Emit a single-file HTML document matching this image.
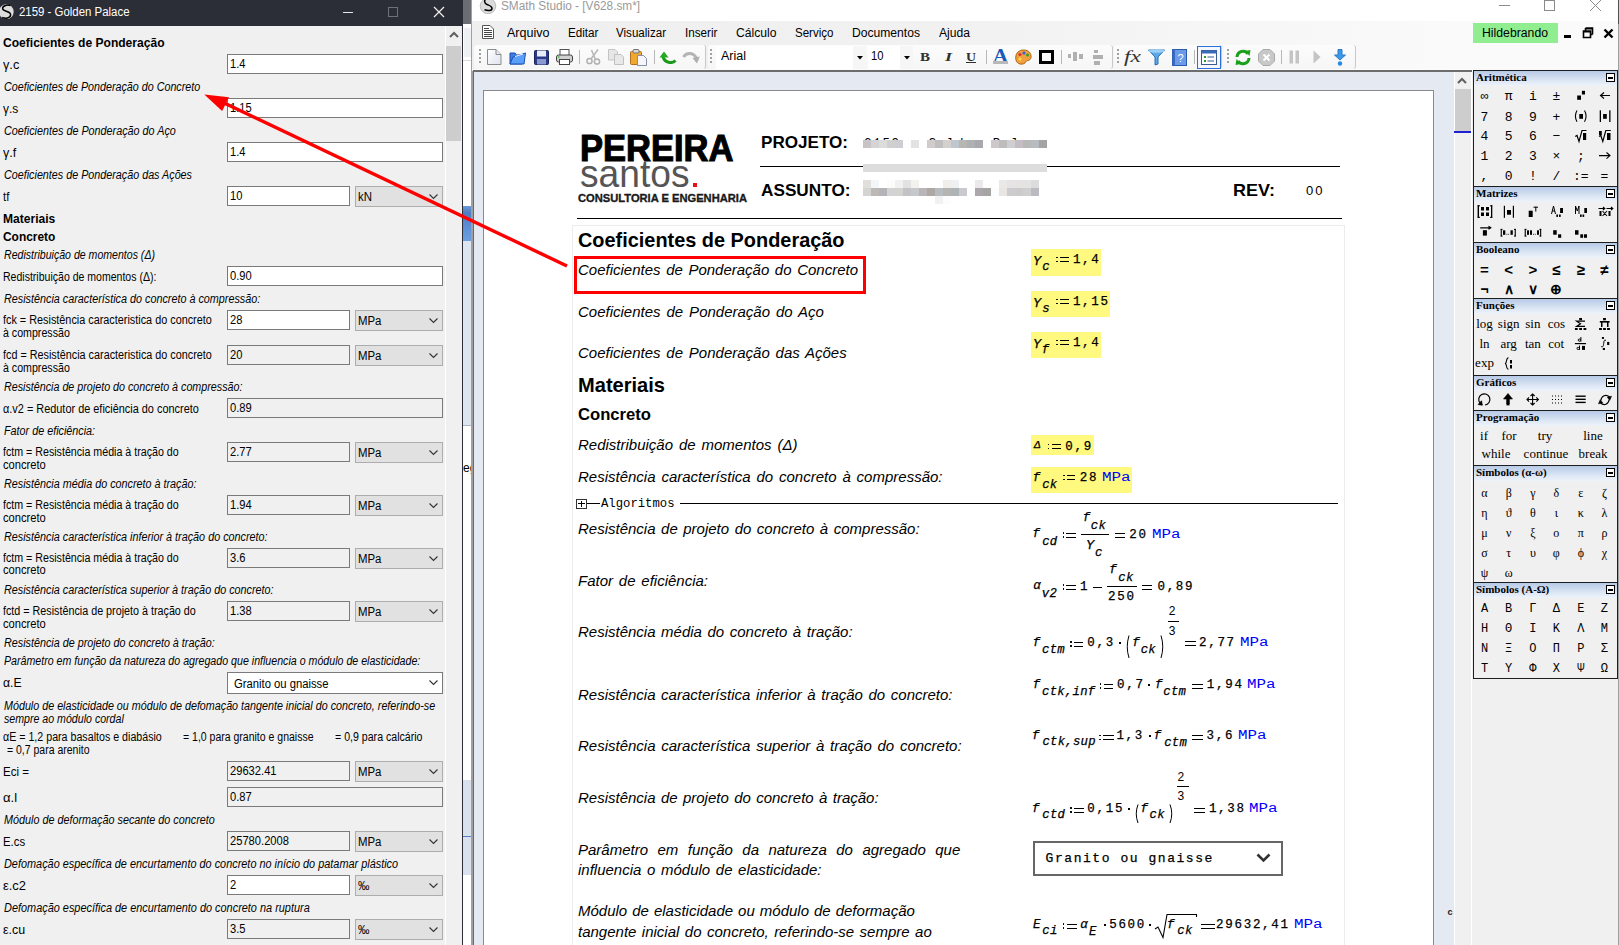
<!DOCTYPE html><html><head><meta charset="utf-8"><style>*{margin:0;padding:0}html,body{width:1619px;height:945px;overflow:hidden;background:#fff;position:relative}
.a{position:absolute}.t{white-space:pre;line-height:normal}
</style></head><body>
<div class="a" style="left:0px;top:0px;width:463px;height:945px;background:#f0f0f0;"></div>
<div class="a" style="left:0px;top:0px;width:463px;height:26px;background:#2b2e37;"></div>
<div class="a" style="left:462px;top:0px;width:1px;height:945px;background:#2b2e37;"></div>
<div class="a" style="left:445px;top:26px;width:1px;height:919px;background:#ffffff;"></div>
<div class="a" style="left:446px;top:26px;width:16px;height:919px;background:#f0f0f0;"></div>
<div class="a" style="left:446px;top:46px;width:15px;height:95px;background:#cdcdcd;"></div>
<svg class="a" style="left:449px;top:31px;" width="10" height="8" viewBox="0 0 10 8"><path d="M1 6 L5 2 L9 6" fill="none" stroke="#606060" stroke-width="2"/></svg>
<svg class="a" style="left:0px;top:2px;" width="16" height="20" viewBox="0 0 16 20"><circle cx="6.3" cy="9.7" r="7.4" fill="#dcdcdc"/><path d="M10.5 3.6 C8 2.6 2.5 3.2 2.6 6.5 C2.7 9.8 10.6 8.8 10.6 12.8 C10.6 16.5 5 16.6 2.2 15.5" fill="none" stroke="#000" stroke-width="1.5"/></svg>
<div class="a t" style="left:19px;top:5.00px;font:12px 'Liberation Sans', sans-serif;color:#ffffff;transform:scaleX(0.9518);transform-origin:0 0;">2159 - Golden Palace</div>
<div class="a" style="left:343px;top:12px;width:10px;height:1px;background:#e8e8e8;"></div>
<div class="a" style="left:388px;top:7px;width:10px;height:10px;box-sizing:border-box;border:1px solid #6e7178;background:none;"></div>
<svg class="a" style="left:433px;top:6px;" width="12" height="12" viewBox="0 0 12 12"><path d="M1 1 L11 11 M11 1 L1 11" stroke="#f0f0f0" stroke-width="1.2"/></svg>
<div class="a t" style="left:3px;top:36.40px;font:bold 12px 'Liberation Sans', sans-serif;color:#000;transform:scaleX(1.0049);transform-origin:0 0;">Coeficientes de Ponderação</div>
<div class="a t" style="left:3px;top:57.80px;font:12px 'Liberation Sans', sans-serif;color:#000;transform:scaleX(1.0623);transform-origin:0 0;">γ.c</div>
<div class="a" style="left:227px;top:54px;width:216px;height:20px;box-sizing:border-box;border:1px solid #7a7a7a;background:#ffffff;"></div>
<div class="a t" style="left:230px;top:57.10px;font:12px 'Liberation Sans', sans-serif;color:#000;transform:scaleX(0.93);transform-origin:0 0;">1.4</div>
<div class="a t" style="left:4px;top:80.10px;font:italic 12px 'Liberation Sans', sans-serif;color:#000;transform:scaleX(0.8939);transform-origin:0 0;">Coeficientes de Ponderação do Concreto</div>
<div class="a t" style="left:3px;top:102.30px;font:12px 'Liberation Sans', sans-serif;color:#000;transform:scaleX(0.9971);transform-origin:0 0;">γ.s</div>
<div class="a" style="left:227px;top:98px;width:216px;height:20px;box-sizing:border-box;border:1px solid #7a7a7a;background:#ffffff;"></div>
<div class="a t" style="left:230px;top:101.10px;font:12px 'Liberation Sans', sans-serif;color:#000;transform:scaleX(0.93);transform-origin:0 0;">1.15</div>
<div class="a t" style="left:4px;top:123.90px;font:italic 12px 'Liberation Sans', sans-serif;color:#000;transform:scaleX(0.8994);transform-origin:0 0;">Coeficientes de Ponderação do Aço</div>
<div class="a t" style="left:3px;top:146.10px;font:12px 'Liberation Sans', sans-serif;color:#000;transform:scaleX(1.0496);transform-origin:0 0;">γ.f</div>
<div class="a" style="left:227px;top:142px;width:216px;height:20px;box-sizing:border-box;border:1px solid #7a7a7a;background:#ffffff;"></div>
<div class="a t" style="left:230px;top:145.10px;font:12px 'Liberation Sans', sans-serif;color:#000;transform:scaleX(0.93);transform-origin:0 0;">1.4</div>
<div class="a t" style="left:4px;top:168.40px;font:italic 12px 'Liberation Sans', sans-serif;color:#000;transform:scaleX(0.8965);transform-origin:0 0;">Coeficientes de Ponderação das Ações</div>
<div class="a t" style="left:3px;top:190.00px;font:12px 'Liberation Sans', sans-serif;color:#000;transform:scaleX(0.9443);transform-origin:0 0;">tf</div>
<div class="a" style="left:227px;top:186px;width:123px;height:20px;box-sizing:border-box;border:1px solid #7a7a7a;background:#ffffff;"></div>
<div class="a t" style="left:230px;top:189.10px;font:12px 'Liberation Sans', sans-serif;color:#000;transform:scaleX(0.93);transform-origin:0 0;">10</div>
<div class="a" style="left:355px;top:186px;width:88px;height:21px;box-sizing:border-box;border:1px solid #adadad;background:#e1e1e1;"></div>
<div class="a t" style="left:358px;top:189.80px;font:12px 'Liberation Sans', sans-serif;color:#000;transform:scaleX(0.95);transform-origin:0 0;">kN</div>
<svg class="a" style="left:429px;top:194px;" width="10" height="6" viewBox="0 0 10 6"><path d="M0.5 0.5 L4.5 4.5 L8.5 0.5" fill="none" stroke="#333" stroke-width="1.1"/></svg>
<div class="a t" style="left:3px;top:212.00px;font:bold 12px 'Liberation Sans', sans-serif;color:#000;transform:scaleX(1.0052);transform-origin:0 0;">Materiais</div>
<div class="a t" style="left:3px;top:230.00px;font:bold 12px 'Liberation Sans', sans-serif;color:#000;transform:scaleX(0.9929);transform-origin:0 0;">Concreto</div>
<div class="a t" style="left:4px;top:247.80px;font:italic 12px 'Liberation Sans', sans-serif;color:#000;transform:scaleX(0.8807);transform-origin:0 0;">Redistribuição de momentos (Δ)</div>
<div class="a t" style="left:3px;top:270.00px;font:12px 'Liberation Sans', sans-serif;color:#000;transform:scaleX(0.8778);transform-origin:0 0;">Redistribuição de momentos (Δ):</div>
<div class="a" style="left:227px;top:266px;width:216px;height:20px;box-sizing:border-box;border:1px solid #7a7a7a;background:#ffffff;"></div>
<div class="a t" style="left:230px;top:269.10px;font:12px 'Liberation Sans', sans-serif;color:#000;transform:scaleX(0.93);transform-origin:0 0;">0.90</div>
<div class="a t" style="left:4px;top:292.20px;font:italic 12px 'Liberation Sans', sans-serif;color:#000;transform:scaleX(0.8996);transform-origin:0 0;">Resistência característica do concreto à compressão:</div>
<div class="a t" style="left:3px;top:313.00px;font:12px 'Liberation Sans', sans-serif;color:#000;transform:scaleX(0.9035);transform-origin:0 0;">fck = Resistência caracteristica do concreto</div>
<div class="a t" style="left:3px;top:325.70px;font:12px 'Liberation Sans', sans-serif;color:#000;transform:scaleX(0.8862);transform-origin:0 0;">à compressão</div>
<div class="a" style="left:227px;top:310px;width:123px;height:20px;box-sizing:border-box;border:1px solid #7a7a7a;background:#ffffff;"></div>
<div class="a t" style="left:230px;top:313.10px;font:12px 'Liberation Sans', sans-serif;color:#000;transform:scaleX(0.93);transform-origin:0 0;">28</div>
<div class="a" style="left:355px;top:310px;width:88px;height:21px;box-sizing:border-box;border:1px solid #adadad;background:#e1e1e1;"></div>
<div class="a t" style="left:358px;top:313.80px;font:12px 'Liberation Sans', sans-serif;color:#000;transform:scaleX(0.95);transform-origin:0 0;">MPa</div>
<svg class="a" style="left:429px;top:318px;" width="10" height="6" viewBox="0 0 10 6"><path d="M0.5 0.5 L4.5 4.5 L8.5 0.5" fill="none" stroke="#333" stroke-width="1.1"/></svg>
<div class="a t" style="left:3px;top:348.30px;font:12px 'Liberation Sans', sans-serif;color:#000;transform:scaleX(0.9008);transform-origin:0 0;">fcd = Resistência caracteristica do concreto</div>
<div class="a t" style="left:3px;top:360.70px;font:12px 'Liberation Sans', sans-serif;color:#000;transform:scaleX(0.8862);transform-origin:0 0;">à compressão</div>
<div class="a" style="left:227px;top:345px;width:123px;height:20px;box-sizing:border-box;border:1px solid #7a7a7a;background:#f0f0f0;"></div>
<div class="a t" style="left:230px;top:348.10px;font:12px 'Liberation Sans', sans-serif;color:#000;transform:scaleX(0.93);transform-origin:0 0;">20</div>
<div class="a" style="left:355px;top:345px;width:88px;height:21px;box-sizing:border-box;border:1px solid #adadad;background:#e1e1e1;"></div>
<div class="a t" style="left:358px;top:348.80px;font:12px 'Liberation Sans', sans-serif;color:#000;transform:scaleX(0.95);transform-origin:0 0;">MPa</div>
<svg class="a" style="left:429px;top:353px;" width="10" height="6" viewBox="0 0 10 6"><path d="M0.5 0.5 L4.5 4.5 L8.5 0.5" fill="none" stroke="#333" stroke-width="1.1"/></svg>
<div class="a t" style="left:4px;top:380.00px;font:italic 12px 'Liberation Sans', sans-serif;color:#000;transform:scaleX(0.8935);transform-origin:0 0;">Resistência de projeto do concreto à compressão:</div>
<div class="a t" style="left:3px;top:401.90px;font:12px 'Liberation Sans', sans-serif;color:#000;transform:scaleX(0.9090);transform-origin:0 0;">α.v2 = Redutor de eficiência do concreto</div>
<div class="a" style="left:227px;top:398px;width:216px;height:20px;box-sizing:border-box;border:1px solid #7a7a7a;background:#f0f0f0;"></div>
<div class="a t" style="left:230px;top:401.10px;font:12px 'Liberation Sans', sans-serif;color:#000;transform:scaleX(0.93);transform-origin:0 0;">0.89</div>
<div class="a t" style="left:4px;top:424.20px;font:italic 12px 'Liberation Sans', sans-serif;color:#000;transform:scaleX(0.8985);transform-origin:0 0;">Fator de eficiência:</div>
<div class="a t" style="left:3px;top:444.90px;font:12px 'Liberation Sans', sans-serif;color:#000;transform:scaleX(0.8884);transform-origin:0 0;">fctm = Resistência média à tração do</div>
<div class="a t" style="left:3px;top:457.70px;font:12px 'Liberation Sans', sans-serif;color:#000;transform:scaleX(0.9298);transform-origin:0 0;">concreto</div>
<div class="a" style="left:227px;top:442px;width:123px;height:20px;box-sizing:border-box;border:1px solid #7a7a7a;background:#f0f0f0;"></div>
<div class="a t" style="left:230px;top:445.10px;font:12px 'Liberation Sans', sans-serif;color:#000;transform:scaleX(0.93);transform-origin:0 0;">2.77</div>
<div class="a" style="left:355px;top:442px;width:88px;height:21px;box-sizing:border-box;border:1px solid #adadad;background:#e1e1e1;"></div>
<div class="a t" style="left:358px;top:445.80px;font:12px 'Liberation Sans', sans-serif;color:#000;transform:scaleX(0.95);transform-origin:0 0;">MPa</div>
<svg class="a" style="left:429px;top:450px;" width="10" height="6" viewBox="0 0 10 6"><path d="M0.5 0.5 L4.5 4.5 L8.5 0.5" fill="none" stroke="#333" stroke-width="1.1"/></svg>
<div class="a t" style="left:4px;top:477.20px;font:italic 12px 'Liberation Sans', sans-serif;color:#000;transform:scaleX(0.8990);transform-origin:0 0;">Resistência média do concreto à tração:</div>
<div class="a t" style="left:3px;top:497.90px;font:12px 'Liberation Sans', sans-serif;color:#000;transform:scaleX(0.8884);transform-origin:0 0;">fctm = Resistência média à tração do</div>
<div class="a t" style="left:3px;top:510.70px;font:12px 'Liberation Sans', sans-serif;color:#000;transform:scaleX(0.9298);transform-origin:0 0;">concreto</div>
<div class="a" style="left:227px;top:495px;width:123px;height:20px;box-sizing:border-box;border:1px solid #7a7a7a;background:#f0f0f0;"></div>
<div class="a t" style="left:230px;top:498.10px;font:12px 'Liberation Sans', sans-serif;color:#000;transform:scaleX(0.93);transform-origin:0 0;">1.94</div>
<div class="a" style="left:355px;top:495px;width:88px;height:21px;box-sizing:border-box;border:1px solid #adadad;background:#e1e1e1;"></div>
<div class="a t" style="left:358px;top:498.80px;font:12px 'Liberation Sans', sans-serif;color:#000;transform:scaleX(0.95);transform-origin:0 0;">MPa</div>
<svg class="a" style="left:429px;top:503px;" width="10" height="6" viewBox="0 0 10 6"><path d="M0.5 0.5 L4.5 4.5 L8.5 0.5" fill="none" stroke="#333" stroke-width="1.1"/></svg>
<div class="a t" style="left:4px;top:529.90px;font:italic 12px 'Liberation Sans', sans-serif;color:#000;transform:scaleX(0.9002);transform-origin:0 0;">Resistência característica inferior à tração do concreto:</div>
<div class="a t" style="left:3px;top:550.70px;font:12px 'Liberation Sans', sans-serif;color:#000;transform:scaleX(0.8884);transform-origin:0 0;">fctm = Resistência média à tração do</div>
<div class="a t" style="left:3px;top:563.40px;font:12px 'Liberation Sans', sans-serif;color:#000;transform:scaleX(0.9298);transform-origin:0 0;">concreto</div>
<div class="a" style="left:227px;top:548px;width:123px;height:20px;box-sizing:border-box;border:1px solid #7a7a7a;background:#f0f0f0;"></div>
<div class="a t" style="left:230px;top:551.10px;font:12px 'Liberation Sans', sans-serif;color:#000;transform:scaleX(0.93);transform-origin:0 0;">3.6</div>
<div class="a" style="left:355px;top:548px;width:88px;height:21px;box-sizing:border-box;border:1px solid #adadad;background:#e1e1e1;"></div>
<div class="a t" style="left:358px;top:551.80px;font:12px 'Liberation Sans', sans-serif;color:#000;transform:scaleX(0.95);transform-origin:0 0;">MPa</div>
<svg class="a" style="left:429px;top:556px;" width="10" height="6" viewBox="0 0 10 6"><path d="M0.5 0.5 L4.5 4.5 L8.5 0.5" fill="none" stroke="#333" stroke-width="1.1"/></svg>
<div class="a t" style="left:4px;top:583.00px;font:italic 12px 'Liberation Sans', sans-serif;color:#000;transform:scaleX(0.9002);transform-origin:0 0;">Resistência característica superior à tração do concreto:</div>
<div class="a t" style="left:3px;top:603.80px;font:12px 'Liberation Sans', sans-serif;color:#000;transform:scaleX(0.8962);transform-origin:0 0;">fctd = Resistência de projeto à tração do</div>
<div class="a t" style="left:3px;top:616.60px;font:12px 'Liberation Sans', sans-serif;color:#000;transform:scaleX(0.9298);transform-origin:0 0;">concreto</div>
<div class="a" style="left:227px;top:601px;width:123px;height:20px;box-sizing:border-box;border:1px solid #7a7a7a;background:#f0f0f0;"></div>
<div class="a t" style="left:230px;top:604.10px;font:12px 'Liberation Sans', sans-serif;color:#000;transform:scaleX(0.93);transform-origin:0 0;">1.38</div>
<div class="a" style="left:355px;top:601px;width:88px;height:21px;box-sizing:border-box;border:1px solid #adadad;background:#e1e1e1;"></div>
<div class="a t" style="left:358px;top:604.80px;font:12px 'Liberation Sans', sans-serif;color:#000;transform:scaleX(0.95);transform-origin:0 0;">MPa</div>
<svg class="a" style="left:429px;top:609px;" width="10" height="6" viewBox="0 0 10 6"><path d="M0.5 0.5 L4.5 4.5 L8.5 0.5" fill="none" stroke="#333" stroke-width="1.1"/></svg>
<div class="a t" style="left:4px;top:635.80px;font:italic 12px 'Liberation Sans', sans-serif;color:#000;transform:scaleX(0.8977);transform-origin:0 0;">Resistência de projeto do concreto à tração:</div>
<div class="a t" style="left:4px;top:653.60px;font:italic 12px 'Liberation Sans', sans-serif;color:#000;transform:scaleX(0.8864);transform-origin:0 0;">Parâmetro em função da natureza do agregado que influencia o módulo de elasticidade:</div>
<div class="a t" style="left:3px;top:675.80px;font:12px 'Liberation Sans', sans-serif;color:#000;transform:scaleX(1.0174);transform-origin:0 0;">α.E</div>
<div class="a" style="left:227px;top:672px;width:216px;height:22px;box-sizing:border-box;border:1px solid #7a7a7a;background:#ffffff;"></div>
<div class="a t" style="left:234px;top:676.50px;font:12px 'Liberation Sans', sans-serif;color:#000;transform:scaleX(0.9381);transform-origin:0 0;">Granito ou gnaisse</div>
<svg class="a" style="left:429px;top:680px;" width="10" height="6" viewBox="0 0 10 6"><path d="M0.5 0.5 L4.5 4.5 L8.5 0.5" fill="none" stroke="#333" stroke-width="1.1"/></svg>
<div class="a t" style="left:4px;top:698.80px;font:italic 12px 'Liberation Sans', sans-serif;color:#000;transform:scaleX(0.8951);transform-origin:0 0;">Módulo de elasticidade ou módulo de defomação tangente inicial do concreto, referindo-se</div>
<div class="a t" style="left:4px;top:711.80px;font:italic 12px 'Liberation Sans', sans-serif;color:#000;transform:scaleX(0.8847);transform-origin:0 0;">sempre ao módulo cordal</div>
<div class="a t" style="left:3px;top:729.90px;font:12px 'Liberation Sans', sans-serif;color:#000;transform:scaleX(0.8885);transform-origin:0 0;">αE = 1,2 para basaltos e diabásio</div>
<div class="a t" style="left:183px;top:729.90px;font:12px 'Liberation Sans', sans-serif;color:#000;transform:scaleX(0.8752);transform-origin:0 0;">= 1,0 para granito e gnaisse</div>
<div class="a t" style="left:335px;top:729.90px;font:12px 'Liberation Sans', sans-serif;color:#000;transform:scaleX(0.8833);transform-origin:0 0;">= 0,9 para calcário</div>
<div class="a t" style="left:7px;top:743.00px;font:12px 'Liberation Sans', sans-serif;color:#000;transform:scaleX(0.8739);transform-origin:0 0;">= 0,7 para arenito</div>
<div class="a t" style="left:3px;top:764.60px;font:12px 'Liberation Sans', sans-serif;color:#000;transform:scaleX(0.9624);transform-origin:0 0;">Eci =</div>
<div class="a" style="left:227px;top:761px;width:123px;height:20px;box-sizing:border-box;border:1px solid #7a7a7a;background:#f0f0f0;"></div>
<div class="a t" style="left:230px;top:764.10px;font:12px 'Liberation Sans', sans-serif;color:#000;transform:scaleX(0.93);transform-origin:0 0;">29632.41</div>
<div class="a" style="left:355px;top:761px;width:88px;height:21px;box-sizing:border-box;border:1px solid #adadad;background:#e1e1e1;"></div>
<div class="a t" style="left:358px;top:764.80px;font:12px 'Liberation Sans', sans-serif;color:#000;transform:scaleX(0.95);transform-origin:0 0;">MPa</div>
<svg class="a" style="left:429px;top:769px;" width="10" height="6" viewBox="0 0 10 6"><path d="M0.5 0.5 L4.5 4.5 L8.5 0.5" fill="none" stroke="#333" stroke-width="1.1"/></svg>
<div class="a t" style="left:3px;top:790.70px;font:12px 'Liberation Sans', sans-serif;color:#000;transform:scaleX(1.0899);transform-origin:0 0;">α.l</div>
<div class="a" style="left:227px;top:787px;width:216px;height:20px;box-sizing:border-box;border:1px solid #7a7a7a;background:#f0f0f0;"></div>
<div class="a t" style="left:230px;top:790.10px;font:12px 'Liberation Sans', sans-serif;color:#000;transform:scaleX(0.93);transform-origin:0 0;">0.87</div>
<div class="a t" style="left:4px;top:812.90px;font:italic 12px 'Liberation Sans', sans-serif;color:#000;transform:scaleX(0.9003);transform-origin:0 0;">Módulo de deformação secante do concreto</div>
<div class="a t" style="left:3px;top:834.90px;font:12px 'Liberation Sans', sans-serif;color:#000;transform:scaleX(0.9467);transform-origin:0 0;">E.cs</div>
<div class="a" style="left:227px;top:831px;width:123px;height:20px;box-sizing:border-box;border:1px solid #7a7a7a;background:#f0f0f0;"></div>
<div class="a t" style="left:230px;top:834.10px;font:12px 'Liberation Sans', sans-serif;color:#000;transform:scaleX(0.93);transform-origin:0 0;">25780.2008</div>
<div class="a" style="left:355px;top:831px;width:88px;height:21px;box-sizing:border-box;border:1px solid #adadad;background:#e1e1e1;"></div>
<div class="a t" style="left:358px;top:834.80px;font:12px 'Liberation Sans', sans-serif;color:#000;transform:scaleX(0.95);transform-origin:0 0;">MPa</div>
<svg class="a" style="left:429px;top:839px;" width="10" height="6" viewBox="0 0 10 6"><path d="M0.5 0.5 L4.5 4.5 L8.5 0.5" fill="none" stroke="#333" stroke-width="1.1"/></svg>
<div class="a t" style="left:4px;top:856.80px;font:italic 12px 'Liberation Sans', sans-serif;color:#000;transform:scaleX(0.9075);transform-origin:0 0;">Defomação específica de encurtamento do concreto no início do patamar plástico</div>
<div class="a t" style="left:3px;top:878.70px;font:12px 'Liberation Sans', sans-serif;color:#000;transform:scaleX(1.0768);transform-origin:0 0;">ε.c2</div>
<div class="a" style="left:227px;top:875px;width:123px;height:20px;box-sizing:border-box;border:1px solid #7a7a7a;background:#ffffff;"></div>
<div class="a t" style="left:230px;top:878.10px;font:12px 'Liberation Sans', sans-serif;color:#000;transform:scaleX(0.93);transform-origin:0 0;">2</div>
<div class="a" style="left:355px;top:875px;width:88px;height:21px;box-sizing:border-box;border:1px solid #adadad;background:#e1e1e1;"></div>
<div class="a t" style="left:358px;top:878.80px;font:12px 'Liberation Sans', sans-serif;color:#000;transform:scaleX(0.95);transform-origin:0 0;">‰</div>
<svg class="a" style="left:429px;top:883px;" width="10" height="6" viewBox="0 0 10 6"><path d="M0.5 0.5 L4.5 4.5 L8.5 0.5" fill="none" stroke="#333" stroke-width="1.1"/></svg>
<div class="a t" style="left:4px;top:900.70px;font:italic 12px 'Liberation Sans', sans-serif;color:#000;transform:scaleX(0.9093);transform-origin:0 0;">Defomação específica de encurtamento do concreto na ruptura</div>
<div class="a t" style="left:3px;top:922.60px;font:12px 'Liberation Sans', sans-serif;color:#000;transform:scaleX(1.0347);transform-origin:0 0;">ε.cu</div>
<div class="a" style="left:227px;top:919px;width:123px;height:20px;box-sizing:border-box;border:1px solid #7a7a7a;background:#f0f0f0;"></div>
<div class="a t" style="left:230px;top:922.10px;font:12px 'Liberation Sans', sans-serif;color:#000;transform:scaleX(0.93);transform-origin:0 0;">3.5</div>
<div class="a" style="left:355px;top:919px;width:88px;height:21px;box-sizing:border-box;border:1px solid #adadad;background:#e1e1e1;"></div>
<div class="a t" style="left:358px;top:922.80px;font:12px 'Liberation Sans', sans-serif;color:#000;transform:scaleX(0.95);transform-origin:0 0;">‰</div>
<svg class="a" style="left:429px;top:927px;" width="10" height="6" viewBox="0 0 10 6"><path d="M0.5 0.5 L4.5 4.5 L8.5 0.5" fill="none" stroke="#333" stroke-width="1.1"/></svg>
<div class="a" style="left:463px;top:0px;width:9px;height:945px;background:#ffffff;"></div>
<div class="a" style="left:463px;top:0px;width:9px;height:24px;background:#6a6d74;"></div>
<div class="a" style="left:464px;top:28px;width:7px;height:29px;background:#eef0f3;"></div>
<div class="a" style="left:463px;top:60px;width:9px;height:1px;background:#d8d8d8;"></div>
<div class="a" style="left:463px;top:206px;width:9px;height:35px;background:linear-gradient(#6b9bd9,#4f7cc0 20%,#5d8fd6 60%,#6d9fe0);"></div>
<div class="a" style="left:463px;top:241px;width:9px;height:185px;background:#dde5f0;"></div>
<div class="a" style="left:463px;top:425px;width:9px;height:1px;background:#aab4c4;"></div>
<div class="a" style="left:463px;top:460px;width:8px;height:16px;overflow:hidden"><div class="a t" style="left:0px;top:0px;font:12px 'Liberation Sans', sans-serif;line-height:16px;color:#000">eg</div></div>
<div class="a" style="left:463px;top:780px;width:9px;height:95px;background:#d9e1ee;"></div>
<div class="a" style="left:463px;top:836px;width:9px;height:1px;background:#5a7fc0;"></div>
<div class="a" style="left:471px;top:0px;width:2px;height:945px;background:#a0a0a0;"></div>
<div class="a" style="left:472px;top:0px;width:1147px;height:21px;background:#ffffff;"></div>
<div class="a" style="left:472px;top:21px;width:1147px;height:50px;background:linear-gradient(to right,#efefef 0%,#f1f1f1 40%,#f7f7f7 70%,#fafafa 85%,#fafafa 100%);"></div>
<div class="a" style="left:472px;top:69px;width:1000px;height:1px;background:#fcfcfc;"></div>
<div class="a" style="left:473px;top:70px;width:999px;height:2px;background:#6d6d6d;"></div>
<div class="a" style="left:473px;top:70px;width:1px;height:875px;background:#6a6a6a;"></div>
<div class="a" style="left:474px;top:72px;width:980px;height:873px;background:#e5e9f1;"></div>
<div class="a" style="left:483px;top:90px;width:951px;height:900px;box-sizing:border-box;border:1px solid #8a8a8a;background:#ffffff;"></div>
<div class="a" style="left:1454px;top:72px;width:1px;height:873px;background:#ffffff;"></div>
<div class="a" style="left:1455px;top:72px;width:16px;height:873px;background:#f0f0f0;"></div>
<div class="a" style="left:1455px;top:89px;width:16px;height:42px;background:#cdcdcd;"></div>
<div class="a" style="left:1454px;top:131px;width:17px;height:2px;background:#2020d0;"></div>
<svg class="a" style="left:1457px;top:77px;" width="10" height="8" viewBox="0 0 10 8"><path d="M1 6 L5 2 L9 6" fill="none" stroke="#606060" stroke-width="2"/></svg>
<div class="a" style="left:1471px;top:72px;width:1px;height:873px;background:#ffffff;"></div>
<div class="a" style="left:1472px;top:72px;width:147px;height:873px;background:#f0f0f0;"></div>
<div class="a" style="left:1618px;top:0px;width:1px;height:24px;background:#505050;"></div>
<div class="a" style="left:1618px;top:24px;width:1px;height:921px;background:#a0a0a0;"></div>
<div class="a t" style="left:1447.5px;top:906.50px;font:bold 9px Liberation Sans;color:#222;">c</div>
<svg class="a" style="left:479px;top:0px;" width="18" height="14" viewBox="0 0 18 14"><circle cx="9" cy="6" r="7.8" fill="#dcdcdc" stroke="#a0a0a0" stroke-width="0.6"/><path d="M6.5 -1 C5 1 5.5 3.5 8 4.5 C10.5 5.5 13 6 13 8.5 C13 11 9 11 5.5 9.8" fill="none" stroke="#000" stroke-width="1.5"/></svg>
<div class="a t" style="left:501px;top:-0.80px;font:12px 'Liberation Sans', sans-serif;color:#9a9a9a;transform:scaleX(0.9830);transform-origin:0 0;">SMath Studio - [V628.sm*]</div>
<div class="a" style="left:1499px;top:5px;width:11px;height:1px;background:#8a8a8a;"></div>
<div class="a" style="left:1544px;top:0px;width:11px;height:11px;box-sizing:border-box;border:1px solid #8a8a8a;background:none;"></div>
<svg class="a" style="left:1589px;top:-1px;" width="13" height="13" viewBox="0 0 13 13"><path d="M1 1 L12 12 M12 1 L1 12" stroke="#8a8a8a" stroke-width="1"/></svg>
<svg class="a" style="left:481px;top:25px;" width="14" height="14" viewBox="0 0 14 14"><path d="M1.5 0.5 H9 L12.5 4 V13.5 H1.5 Z" fill="#fff" stroke="#555" stroke-width="1"/><path d="M3 3.5 H8 M3 5.5 H11 M3 7.5 H11 M3 9.5 H11 M3 11.5 H11" stroke="#444" stroke-width="1"/></svg>
<div class="a t" style="left:506.5px;top:26.10px;font:12px 'Liberation Sans', sans-serif;color:#000;transform:scaleX(1.0445);transform-origin:0 0;">Arquivo</div>
<div class="a t" style="left:567.5px;top:26.10px;font:12px 'Liberation Sans', sans-serif;color:#000;transform:scaleX(0.9726);transform-origin:0 0;">Editar</div>
<div class="a t" style="left:616.0px;top:26.10px;font:12px 'Liberation Sans', sans-serif;color:#000;transform:scaleX(0.9650);transform-origin:0 0;">Visualizar</div>
<div class="a t" style="left:684.5px;top:26.10px;font:12px 'Liberation Sans', sans-serif;color:#000;transform:scaleX(0.9747);transform-origin:0 0;">Inserir</div>
<div class="a t" style="left:735.5px;top:26.10px;font:12px 'Liberation Sans', sans-serif;color:#000;transform:scaleX(1.0117);transform-origin:0 0;">Cálculo</div>
<div class="a t" style="left:794.5px;top:26.10px;font:12px 'Liberation Sans', sans-serif;color:#000;transform:scaleX(0.9621);transform-origin:0 0;">Serviço</div>
<div class="a t" style="left:851.5px;top:26.10px;font:12px 'Liberation Sans', sans-serif;color:#000;transform:scaleX(1.0093);transform-origin:0 0;">Documentos</div>
<div class="a t" style="left:938.5px;top:26.10px;font:12px 'Liberation Sans', sans-serif;color:#000;transform:scaleX(1.0097);transform-origin:0 0;">Ajuda</div>
<div class="a" style="left:1473px;top:23px;width:85px;height:20px;background:#90ee90;"></div>
<div class="a t" style="left:1481.5px;top:26.10px;font:12px 'Liberation Sans', sans-serif;color:#000;transform:scaleX(1.0198);transform-origin:0 0;">Hildebrando</div>
<div class="a" style="left:1564px;top:35px;width:7px;height:3px;background:#000;"></div>
<svg class="a" style="left:1582px;top:27px;" width="12" height="12" viewBox="0 0 12 12"><path d="M3.5 1 H10.5 V7.5 M1.5 4 H8.5 V10.5 H1.5 Z M3.5 1 V4 M8.5 7.5 H10.5" fill="none" stroke="#000" stroke-width="1.6"/><path d="M3.5 1.8 H10.5 M1.5 4.8 H8.5" stroke="#000" stroke-width="1.6"/></svg>
<svg class="a" style="left:1603px;top:28px;" width="11" height="11" viewBox="0 0 11 11"><path d="M1.5 1.5 L9.5 9.5 M9.5 1.5 L1.5 9.5" stroke="#000" stroke-width="2.4"/></svg>
<div class="a" style="left:474px;top:45px;width:232px;height:24px;box-sizing:border-box;border:none;background:linear-gradient(#fcfcfc,#f6f6f6);border-radius:3px;border-right:1px solid #c8c8c8;"></div>
<div class="a" style="left:708px;top:45px;width:405px;height:24px;box-sizing:border-box;border:none;background:linear-gradient(#fcfcfc,#f6f6f6);border-radius:3px;border-right:1px solid #c8c8c8;"></div>
<div class="a" style="left:1114px;top:45px;width:108px;height:24px;box-sizing:border-box;border:none;background:linear-gradient(#fcfcfc,#f6f6f6);border-radius:3px;border-right:1px solid #c8c8c8;"></div>
<div class="a" style="left:1224px;top:45px;width:132px;height:24px;box-sizing:border-box;border:none;background:linear-gradient(#fcfcfc,#f6f6f6);border-radius:3px;border-right:1px solid #c8c8c8;"></div>
<div class="a" style="left:479px;top:49px;width:2px;height:2px;background:#a0a0a0;"></div>
<div class="a" style="left:479px;top:53px;width:2px;height:2px;background:#a0a0a0;"></div>
<div class="a" style="left:479px;top:57px;width:2px;height:2px;background:#a0a0a0;"></div>
<div class="a" style="left:479px;top:61px;width:2px;height:2px;background:#a0a0a0;"></div>
<div class="a" style="left:710px;top:49px;width:2px;height:2px;background:#a0a0a0;"></div>
<div class="a" style="left:710px;top:53px;width:2px;height:2px;background:#a0a0a0;"></div>
<div class="a" style="left:710px;top:57px;width:2px;height:2px;background:#a0a0a0;"></div>
<div class="a" style="left:710px;top:61px;width:2px;height:2px;background:#a0a0a0;"></div>
<div class="a" style="left:1117px;top:49px;width:2px;height:2px;background:#a0a0a0;"></div>
<div class="a" style="left:1117px;top:53px;width:2px;height:2px;background:#a0a0a0;"></div>
<div class="a" style="left:1117px;top:57px;width:2px;height:2px;background:#a0a0a0;"></div>
<div class="a" style="left:1117px;top:61px;width:2px;height:2px;background:#a0a0a0;"></div>
<div class="a" style="left:1227px;top:49px;width:2px;height:2px;background:#a0a0a0;"></div>
<div class="a" style="left:1227px;top:53px;width:2px;height:2px;background:#a0a0a0;"></div>
<div class="a" style="left:1227px;top:57px;width:2px;height:2px;background:#a0a0a0;"></div>
<div class="a" style="left:1227px;top:61px;width:2px;height:2px;background:#a0a0a0;"></div>
<svg class="a" style="left:487px;top:49px;" width="15" height="17" viewBox="0 0 15 17"><path d="M0.5 0.5 H9 L14 5.5 V15.5 H0.5 Z" fill="url(#g1)" stroke="#8c8c8c"/><path d="M9 0.5 V5.5 H14" fill="#e8e8f0" stroke="#8c8c8c"/><defs><linearGradient id="g1" x1="0" y1="0" x2="1" y2="1"><stop offset="0" stop-color="#fff"/><stop offset="1" stop-color="#dde3ee"/></linearGradient></defs></svg>
<svg class="a" style="left:509px;top:50px;" width="18" height="16" viewBox="0 0 18 16"><path d="M1 3 H6 L7.5 5 H13 V14 H1 Z" fill="#3d7fe0" stroke="#1f4fb0"/><path d="M4 7 L16.5 3 L15 14 H1 Z" fill="#5aa0f8" stroke="#1a4db8"/><path d="M6 6.5 L14 4" stroke="#fff" stroke-width="1"/></svg>
<svg class="a" style="left:534px;top:50px;" width="15" height="15" viewBox="0 0 15 15"><rect x="0.5" y="0.5" width="14" height="14" rx="1" fill="#2a3a8a" stroke="#1a245a"/><rect x="3" y="0.5" width="9" height="6" fill="#e8ecf8"/><rect x="3" y="9" width="9" height="5.5" fill="#8a9ad0"/></svg>
<svg class="a" style="left:556px;top:49px;" width="17" height="17" viewBox="0 0 17 17"><rect x="4" y="0.5" width="9" height="6" fill="#fff" stroke="#555"/><rect x="0.5" y="6" width="16" height="7" rx="2" fill="#d0d0d0" stroke="#444"/><rect x="3.5" y="10.5" width="10" height="5" fill="#fff" stroke="#444"/><circle cx="2.8" cy="8" r="0.8" fill="#2a2"/></svg>
<div class="a" style="left:579px;top:50px;width:1px;height:14px;background:#b8b8b8;"></div>
<svg class="a" style="left:586px;top:49px;" width="15" height="16" viewBox="0 0 15 16"><circle cx="3.5" cy="12" r="2.6" fill="none" stroke="#b0b0b0" stroke-width="1.5"/><circle cx="11" cy="12.5" r="2.6" fill="none" stroke="#b0b0b0" stroke-width="1.5"/><path d="M5 10 L12 0.5 M9.5 10.5 L5.5 1" stroke="#b8b8b8" stroke-width="1.6"/></svg>
<svg class="a" style="left:608px;top:49px;" width="17" height="17" viewBox="0 0 17 17"><path d="M0.5 0.5 H7 L9.5 3 V11 H0.5 Z" fill="#e6e6e6" stroke="#c4c4c4"/><path d="M6.5 5.5 H13 L15.5 8 V15.5 H6.5 Z" fill="#e8e8e8" stroke="#c0c0c0"/></svg>
<svg class="a" style="left:630px;top:49px;" width="18" height="17" viewBox="0 0 18 17"><rect x="0.5" y="2.5" width="11" height="13" rx="1" fill="#f0a830" stroke="#b07020"/><rect x="3" y="0.5" width="6" height="3.5" rx="1" fill="#d8d8d8" stroke="#777"/><path d="M7.5 6.5 H13.5 L16.5 9.5 V16.5 H7.5 Z" fill="#f4f6fb" stroke="#8890a8"/></svg>
<div class="a" style="left:654px;top:50px;width:1px;height:14px;background:#b8b8b8;"></div>
<svg class="a" style="left:659px;top:51px;" width="18" height="13" viewBox="0 0 18 13"><path d="M4 6 C6 12 13 13 16.5 9.5" fill="none" stroke="#1a9a1a" stroke-width="3"/><path d="M0.5 6.5 L5 0.5 L9.5 6.5 Z" fill="#22aa22"/></svg>
<svg class="a" style="left:682px;top:51px;" width="18" height="13" viewBox="0 0 18 13"><path d="M1.5 6 C4 1.5 11 1 14 6.5 L15 10" fill="none" stroke="#b4b4b4" stroke-width="3"/><path d="M10.5 7 L15 12.5 L17.8 5.5 Z" fill="#b0b0b0"/></svg>
<div class="a" style="left:716px;top:46px;width:150px;height:23px;background:#ffffff;"></div>
<div class="a" style="left:853px;top:46px;width:13px;height:23px;background:#f6f6f6;"></div>
<div class="a t" style="left:721px;top:48.80px;font:12px 'Liberation Sans', sans-serif;color:#000;transform:scaleX(1.0410);transform-origin:0 0;">Arial</div>
<svg class="a" style="left:857px;top:56px;" width="6" height="4" viewBox="0 0 6 4"><path d="M0 0 H6 L3 3.5 Z" fill="#000"/></svg>
<div class="a" style="left:868px;top:46px;width:45px;height:23px;background:#ffffff;"></div>
<div class="a" style="left:900px;top:46px;width:13px;height:23px;background:#f6f6f6;"></div>
<div class="a t" style="left:870.5px;top:48.80px;font:12px 'Liberation Sans', sans-serif;color:#000;transform:scaleX(0.9357);transform-origin:0 0;">10</div>
<svg class="a" style="left:904px;top:56px;" width="6" height="4" viewBox="0 0 6 4"><path d="M0 0 H6 L3 3.5 Z" fill="#000"/></svg>
<div class="a t" style="left:920px;top:49.50px;font:bold 12px 'Liberation Serif', serif;color:#303030;transform:scaleX(1.2476);transform-origin:0 0;">B</div>
<div class="a t" style="left:945px;top:49.50px;font:italic bold 12px 'Liberation Serif', serif;color:#303030;transform:scaleX(1.4983);transform-origin:0 0;">I</div>
<div class="a t" style="left:966px;top:49.50px;font:bold 12px 'Liberation Serif', serif;color:#303030;transform:scaleX(1.1532);transform-origin:0 0;text-decoration:underline;">U</div>
<div class="a" style="left:986px;top:50px;width:1px;height:14px;background:#b8b8b8;"></div>
<div class="a t" style="left:992.5px;top:46.00px;font:bold 18px 'Liberation Serif', serif;color:#1a5ab8;transform:scaleX(1.1538);transform-origin:0 0;">A</div>
<div class="a" style="left:993px;top:61px;width:15px;height:3px;background:#b8b8b8;"></div>
<svg class="a" style="left:1015px;top:49px;" width="17" height="16" viewBox="0 0 17 16"><path d="M8.5 1 C14 1 16.5 4.5 16 8.5 C15.5 12 12 11 11 12.5 C10 14.5 8 15.5 5 15 C1.5 14.2 0.5 11 0.8 8 C1 4 4 1 8.5 1 Z" fill="#f0a040" stroke="#b06010"/><circle cx="5" cy="5.5" r="1.6" fill="#e03030"/><circle cx="9" cy="4" r="1.6" fill="#3060e0"/><circle cx="12.5" cy="6" r="1.5" fill="#30a030"/><circle cx="5" cy="10" r="1.5" fill="#ffe040"/></svg>
<div class="a" style="left:1039px;top:50px;width:15px;height:14px;box-sizing:border-box;border:3px solid #000;background:none;"></div>
<div class="a" style="left:1061px;top:50px;width:1px;height:14px;background:#b8b8b8;"></div>
<svg class="a" style="left:1068px;top:52px;" width="15" height="10" viewBox="0 0 15 10"><rect x="0" y="2" width="3" height="4" fill="#b0b0b0"/><rect x="5" y="0" width="4" height="9" fill="#b0b0b0"/><rect x="11" y="2" width="4" height="5" fill="#b0b0b0"/></svg>
<svg class="a" style="left:1093px;top:50px;" width="11" height="15" viewBox="0 0 11 15"><rect x="1" y="0" width="4" height="3" fill="#b0b0b0"/><rect x="0" y="5" width="10" height="4" fill="#b0b0b0"/><rect x="1" y="11" width="6" height="4" fill="#b0b0b0"/></svg>
<div class="a t" style="left:1124px;top:47.00px;font:italic 17px 'Liberation Serif', serif;color:#333;transform:scaleX(1.3842);transform-origin:0 0;">fx</div>
<svg class="a" style="left:1148px;top:49px;" width="17" height="17" viewBox="0 0 17 17"><path d="M0.5 1 H16.5 L10 8 V15 L7 16 V8 Z" fill="#5aa8e8" stroke="#2a70b0"/><ellipse cx="8.5" cy="2" rx="8" ry="1.8" fill="#9ad0f8"/></svg>
<svg class="a" style="left:1172px;top:49px;" width="15" height="17" viewBox="0 0 15 17"><rect x="0.5" y="0.5" width="14" height="16" fill="#6a9ae8" stroke="#2a5ab0"/><rect x="0.5" y="0.5" width="2.5" height="16" fill="#3a6ac0"/><text x="8.5" y="13" font-family="Liberation Sans" font-size="11" fill="#fff" text-anchor="middle">?</text></svg>
<div class="a" style="left:1194px;top:50px;width:1px;height:14px;background:#b8b8b8;"></div>
<div class="a" style="left:1197px;top:46px;width:24px;height:23px;box-sizing:border-box;border:1px solid #2a70d8;background:#f4f8fe;"></div>
<svg class="a" style="left:1201px;top:50px;" width="16" height="15" viewBox="0 0 16 15"><rect x="0.5" y="0.5" width="15" height="14" fill="#fff" stroke="#3a5a90"/><rect x="0.5" y="0.5" width="15" height="3" fill="#3a6ab8"/><rect x="3" y="6" width="2" height="2" fill="#2a9a2a"/><rect x="3" y="10" width="2" height="2" fill="#2a9a2a"/><path d="M6.5 7 H13 M6.5 11 H13" stroke="#3a5a90"/></svg>
<svg class="a" style="left:1234px;top:49px;" width="18" height="17" viewBox="0 0 18 17"><path d="M3 8 A6 6 0 0 1 14 5" fill="none" stroke="#1aa01a" stroke-width="3"/><path d="M11 2 L16.5 1 L15.5 7 Z" fill="#1aa01a"/><path d="M15 9 A6 6 0 0 1 4 12" fill="none" stroke="#1aa01a" stroke-width="3"/><path d="M7 15 L1.5 16 L2.5 10 Z" fill="#1aa01a"/></svg>
<svg class="a" style="left:1258px;top:49px;" width="17" height="17" viewBox="0 0 17 17"><path d="M5 0.5 H12 L16.5 5 V12 L12 16.5 H5 L0.5 12 V5 Z" fill="#c8c8c8" stroke="#a8a8a8"/><path d="M5.5 5.5 L11.5 11.5 M11.5 5.5 L5.5 11.5" stroke="#fff" stroke-width="2"/></svg>
<div class="a" style="left:1281px;top:50px;width:1px;height:14px;background:#b8b8b8;"></div>
<svg class="a" style="left:1289px;top:50px;" width="11" height="14" viewBox="0 0 11 14"><rect x="0.5" y="0.5" width="3.5" height="13" fill="#c4c4c4"/><rect x="6.5" y="0.5" width="3.5" height="13" fill="#c4c4c4"/></svg>
<svg class="a" style="left:1313px;top:50px;" width="8" height="14" viewBox="0 0 8 14"><path d="M0.5 0.5 L7.5 7 L0.5 13.5 Z" fill="#c4c4c4"/></svg>
<svg class="a" style="left:1334px;top:49px;" width="12" height="17" viewBox="0 0 12 17"><path d="M4 0.5 H8 V6 H11.5 L6 11 L0.5 6 H4 Z" fill="#3a9ae8" stroke="#2a78c8"/><circle cx="6" cy="14.5" r="2.2" fill="#2a88e0"/></svg>
<div class="a" style="left:1473px;top:70px;width:145px;height:609px;box-sizing:border-box;border:1px solid #1e1e1e;background:#f0f0f0;"></div>
<div class="a" style="left:1474px;top:70px;width:143px;height:1px;background:#1e1e1e;"></div>
<div class="a" style="left:1474px;top:71px;width:143px;height:15px;background:linear-gradient(#b7cae6,#dbe5f4 60%,#eef3fb);"></div>
<div class="a t" style="left:1476px;top:71.20px;font:bold 11px 'Liberation Serif', serif;color:#000;">Aritmética</div>
<div class="a" style="left:1606px;top:73px;width:9px;height:9px;box-sizing:border-box;border:1px solid #000;background:#fff;"></div>
<div class="a" style="left:1608px;top:77px;width:5px;height:1.5px;background:#000;"></div>
<div class="a" style="left:1474px;top:186px;width:143px;height:1px;background:#1e1e1e;"></div>
<div class="a t" style="left:1469.5px;top:89.4px;width:30px;height:18px;line-height:18px;text-align:center;font:13px 'Liberation Mono', monospace;color:#000">∞</div>
<div class="a t" style="left:1493.7px;top:89.4px;width:30px;height:18px;line-height:18px;text-align:center;font:13px 'Liberation Mono', monospace;color:#000">π</div>
<div class="a t" style="left:1517.9px;top:89.4px;width:30px;height:18px;line-height:18px;text-align:center;font:13px 'Liberation Mono', monospace;color:#000">i</div>
<div class="a t" style="left:1541.3px;top:89.4px;width:30px;height:18px;line-height:18px;text-align:center;font:13px 'Liberation Mono', monospace;color:#000">±</div>
<div class="a t" style="left:1469.5px;top:109.5px;width:30px;height:18px;line-height:18px;text-align:center;font:13px 'Liberation Mono', monospace;color:#000">7</div>
<div class="a t" style="left:1493.7px;top:109.5px;width:30px;height:18px;line-height:18px;text-align:center;font:13px 'Liberation Mono', monospace;color:#000">8</div>
<div class="a t" style="left:1517.9px;top:109.5px;width:30px;height:18px;line-height:18px;text-align:center;font:13px 'Liberation Mono', monospace;color:#000">9</div>
<div class="a t" style="left:1541.3px;top:109.5px;width:30px;height:18px;line-height:18px;text-align:center;font:13px 'Liberation Mono', monospace;color:#000">+</div>
<div class="a t" style="left:1469.5px;top:129.29999999999998px;width:30px;height:18px;line-height:18px;text-align:center;font:13px 'Liberation Mono', monospace;color:#000">4</div>
<div class="a t" style="left:1493.7px;top:129.29999999999998px;width:30px;height:18px;line-height:18px;text-align:center;font:13px 'Liberation Mono', monospace;color:#000">5</div>
<div class="a t" style="left:1517.9px;top:129.29999999999998px;width:30px;height:18px;line-height:18px;text-align:center;font:13px 'Liberation Mono', monospace;color:#000">6</div>
<div class="a t" style="left:1541.3px;top:129.29999999999998px;width:30px;height:18px;line-height:18px;text-align:center;font:13px 'Liberation Mono', monospace;color:#000">−</div>
<div class="a t" style="left:1469.5px;top:149.39999999999998px;width:30px;height:18px;line-height:18px;text-align:center;font:13px 'Liberation Mono', monospace;color:#000">1</div>
<div class="a t" style="left:1493.7px;top:149.39999999999998px;width:30px;height:18px;line-height:18px;text-align:center;font:13px 'Liberation Mono', monospace;color:#000">2</div>
<div class="a t" style="left:1517.9px;top:149.39999999999998px;width:30px;height:18px;line-height:18px;text-align:center;font:13px 'Liberation Mono', monospace;color:#000">3</div>
<div class="a t" style="left:1541.3px;top:149.39999999999998px;width:30px;height:18px;line-height:18px;text-align:center;font:13px 'Liberation Mono', monospace;color:#000">×</div>
<div class="a t" style="left:1565.8px;top:149.39999999999998px;width:30px;height:18px;line-height:18px;text-align:center;font:13px 'Liberation Mono', monospace;color:#000">;</div>
<div class="a t" style="left:1469.5px;top:169.2px;width:30px;height:18px;line-height:18px;text-align:center;font:13px 'Liberation Mono', monospace;color:#000">,</div>
<div class="a t" style="left:1493.7px;top:169.2px;width:30px;height:18px;line-height:18px;text-align:center;font:13px 'Liberation Mono', monospace;color:#000">0</div>
<div class="a t" style="left:1517.9px;top:169.2px;width:30px;height:18px;line-height:18px;text-align:center;font:13px 'Liberation Mono', monospace;color:#000">!</div>
<div class="a t" style="left:1541.3px;top:169.2px;width:30px;height:18px;line-height:18px;text-align:center;font:13px 'Liberation Mono', monospace;color:#000">/</div>
<div class="a t" style="left:1565.8px;top:169.2px;width:30px;height:18px;line-height:18px;text-align:center;font:13px 'Liberation Mono', monospace;color:#000">:=</div>
<div class="a t" style="left:1589.4px;top:169.2px;width:30px;height:18px;line-height:18px;text-align:center;font:13px 'Liberation Mono', monospace;color:#000">=</div>
<svg class="a" style="left:1474px;top:86px;" width="144" height="100" viewBox="0 0 144 100"><g fill="#000"><rect x="103.2" y="9.5" width="3.8" height="4.3"/><rect x="107.9" y="4.8" width="3.1" height="3.7"/><path d="M1600.5 95.5 H1610 M1604 92.5 L1600.5 95.5 L1604 98.5" transform="translate(-1474,-86)" fill="none" stroke="#000" stroke-width="1.1"/><path d="M1577 110.5 Q1573.8 116 1577 121.8" transform="translate(-1474,-86)" fill="none" stroke="#000" stroke-width="1.1"/><path d="M1584.5 110.5 Q1587.7 116 1584.5 121.8" transform="translate(-1474,-86)" fill="none" stroke="#000" stroke-width="1.1"/><rect x="105.3" y="28.0" width="3.7" height="4.8"/><rect x="125.7" y="24.3" width="1.3" height="11.7"/><rect x="129.1" y="28.0" width="3.7" height="4.8"/><rect x="135.2" y="24.3" width="1.3" height="11.7"/><path d="M1575.2 136.5 L1577 135.5 L1579 141.5 L1582 130.5 H1586.5" transform="translate(-1474,-86)" fill="none" stroke="#000" stroke-width="1.2"/><rect x="109.0" y="47.0" width="3.2" height="7.0"/><path d="M1599 136.5 L1600.8 135.5 L1602.8 141.5 L1605.8 130.5 H1610.8" transform="translate(-1474,-86)" fill="none" stroke="#000" stroke-width="1.2"/><rect x="133.0" y="47.0" width="3.5" height="7.0"/><rect x="125.0" y="45.0" width="2.8" height="4.2"/><path d="M1599 155.6 H1610 M1606.5 152.5 L1610 155.6 L1606.5 158.7" transform="translate(-1474,-86)" fill="none" stroke="#000" stroke-width="1.1"/></g></svg>
<div class="a" style="left:1474px;top:186px;width:143px;height:1px;background:#1e1e1e;"></div>
<div class="a" style="left:1474px;top:187px;width:143px;height:15px;background:linear-gradient(#b7cae6,#dbe5f4 60%,#eef3fb);"></div>
<div class="a t" style="left:1476px;top:187.20px;font:bold 11px 'Liberation Serif', serif;color:#000;">Matrizes</div>
<div class="a" style="left:1606px;top:189px;width:9px;height:9px;box-sizing:border-box;border:1px solid #000;background:#fff;"></div>
<div class="a" style="left:1608px;top:193px;width:5px;height:1.5px;background:#000;"></div>
<div class="a" style="left:1474px;top:242px;width:143px;height:1px;background:#1e1e1e;"></div>
<svg class="a" style="left:1474px;top:200px;" width="144" height="42" viewBox="0 0 144 42"><g fill="#000"><rect x="3.6" y="5.3" width="1.4" height="12.5"/><rect x="3.6" y="5.3" width="2.4" height="1.0"/><rect x="3.6" y="16.8" width="2.4" height="1.0"/><rect x="7.0" y="7.0" width="3.0" height="3.5"/><rect x="12.0" y="7.0" width="3.0" height="3.5"/><rect x="7.0" y="12.5" width="3.0" height="3.5"/><rect x="12.0" y="12.5" width="3.0" height="3.5"/><rect x="17.0" y="5.3" width="1.3" height="12.5"/><rect x="16.0" y="5.3" width="2.3" height="1.0"/><rect x="16.0" y="16.8" width="2.3" height="1.0"/><rect x="29.8" y="5.8" width="1.2" height="12.0"/><rect x="33.0" y="10.0" width="4.0" height="4.7"/><rect x="38.8" y="5.8" width="1.2" height="12.0"/><rect x="54.7" y="10.7" width="4.0" height="6.3"/><rect x="59.5" y="6.7" width="4.5" height="1.0"/><rect x="61.3" y="6.7" width="1.0" height="4.9"/><path d="M1551.5 214 L1553.5 206 L1555.5 214 M1552.3 211 H1554.8" transform="translate(-1474,-200)" fill="none" stroke="#000" stroke-width="1"/><rect x="82.3" y="14.5" width="1.7" height="2.4"/><rect x="85.0" y="14.5" width="1.7" height="2.4"/><rect x="86.1" y="8.0" width="2.9" height="5.0"/><path d="M1575.5 214 V206 L1577.3 211 L1579 206 V214" transform="translate(-1474,-200)" fill="none" stroke="#000" stroke-width="1"/><rect x="106.0" y="14.5" width="1.7" height="2.4"/><rect x="108.5" y="14.5" width="1.7" height="2.4"/><rect x="110.3" y="8.0" width="2.7" height="5.0"/><path d="M1598.5 208.5 H1604.5 M1603 207 L1604.8 208.5 L1603 210 M1606.5 208.5 H1612.5 M1611 207 L1612.8 208.5 L1611 210 M1602.5 211 L1607 216 M1607 211 L1602.5 216" transform="translate(-1474,-200)" fill="none" stroke="#000" stroke-width="1.1"/><rect x="125.5" y="11.0" width="2.0" height="5.0"/><rect x="134.5" y="11.0" width="2.0" height="5.0"/><path d="M1480.2 227.8 H1490.5 M1488.5 226.3 L1490.8 227.8 L1488.5 229.3" transform="translate(-1474,-200)" fill="none" stroke="#000" stroke-width="1.2"/><rect x="8.9" y="30.2" width="4.0" height="5.4"/><rect x="26.7" y="28.9" width="1.1" height="7.6"/><rect x="26.7" y="28.9" width="1.8" height="1.0"/><rect x="26.7" y="35.5" width="1.8" height="1.0"/><rect x="29.0" y="30.3" width="2.3" height="4.5"/><rect x="32.5" y="33.8" width="0.8" height="1.0"/><rect x="34.3" y="33.8" width="0.8" height="1.0"/><rect x="36.5" y="30.3" width="2.3" height="4.5"/><rect x="40.7" y="28.9" width="1.1" height="7.6"/><rect x="40.0" y="28.9" width="1.8" height="1.0"/><rect x="40.0" y="35.5" width="1.8" height="1.0"/><rect x="50.7" y="28.9" width="1.1" height="7.6"/><rect x="50.7" y="28.9" width="1.8" height="1.0"/><rect x="50.7" y="35.5" width="1.8" height="1.0"/><rect x="53.0" y="30.3" width="2.0" height="4.5"/><rect x="56.0" y="30.3" width="2.0" height="4.5"/><rect x="59.0" y="33.8" width="0.8" height="1.0"/><rect x="60.8" y="33.8" width="0.8" height="1.0"/><rect x="63.0" y="30.3" width="2.0" height="4.5"/><rect x="66.1" y="28.9" width="1.1" height="7.6"/><rect x="65.4" y="28.9" width="1.8" height="1.0"/><rect x="65.4" y="35.5" width="1.8" height="1.0"/><rect x="79.2" y="30.2" width="3.5" height="4.5"/><rect x="84.1" y="34.3" width="3.1" height="3.5"/><rect x="101.0" y="30.2" width="3.5" height="4.5"/><rect x="106.3" y="34.3" width="2.7" height="3.5"/><rect x="109.9" y="34.3" width="3.1" height="3.5"/></g></svg>
<div class="a" style="left:1474px;top:242px;width:143px;height:1px;background:#1e1e1e;"></div>
<div class="a" style="left:1474px;top:243px;width:143px;height:15px;background:linear-gradient(#b7cae6,#dbe5f4 60%,#eef3fb);"></div>
<div class="a t" style="left:1476px;top:243.20px;font:bold 11px 'Liberation Serif', serif;color:#000;">Booleano</div>
<div class="a" style="left:1606px;top:245px;width:9px;height:9px;box-sizing:border-box;border:1px solid #000;background:#fff;"></div>
<div class="a" style="left:1608px;top:249px;width:5px;height:1.5px;background:#000;"></div>
<div class="a" style="left:1474px;top:298px;width:143px;height:1px;background:#1e1e1e;"></div>
<div class="a t" style="left:1469.5px;top:261.3px;width:30px;height:18px;line-height:18px;text-align:center;font:bold 15px 'Liberation Sans', sans-serif;color:#000">=</div>
<div class="a t" style="left:1493.7px;top:261.3px;width:30px;height:18px;line-height:18px;text-align:center;font:bold 15px 'Liberation Sans', sans-serif;color:#000"><</div>
<div class="a t" style="left:1517.9px;top:261.3px;width:30px;height:18px;line-height:18px;text-align:center;font:bold 15px 'Liberation Sans', sans-serif;color:#000">></div>
<div class="a t" style="left:1541.3px;top:261.3px;width:30px;height:18px;line-height:18px;text-align:center;font:bold 15px 'Liberation Sans', sans-serif;color:#000">≤</div>
<div class="a t" style="left:1565.8px;top:261.3px;width:30px;height:18px;line-height:18px;text-align:center;font:bold 15px 'Liberation Sans', sans-serif;color:#000">≥</div>
<div class="a t" style="left:1589.4px;top:261.3px;width:30px;height:18px;line-height:18px;text-align:center;font:bold 15px 'Liberation Sans', sans-serif;color:#000">≠</div>
<div class="a t" style="left:1469.5px;top:281.4px;width:30px;height:18px;line-height:18px;text-align:center;font:bold 14px 'Liberation Sans', sans-serif;color:#000">¬</div>
<div class="a t" style="left:1493.7px;top:281.4px;width:30px;height:18px;line-height:18px;text-align:center;font:bold 14px 'Liberation Sans', sans-serif;color:#000">∧</div>
<div class="a t" style="left:1517.9px;top:281.4px;width:30px;height:18px;line-height:18px;text-align:center;font:bold 14px 'Liberation Sans', sans-serif;color:#000">∨</div>
<div class="a t" style="left:1541.3px;top:281.4px;width:30px;height:18px;line-height:18px;text-align:center;font:bold 14px 'Liberation Sans', sans-serif;color:#000">⊕</div>
<div class="a" style="left:1474px;top:298px;width:143px;height:1px;background:#1e1e1e;"></div>
<div class="a" style="left:1474px;top:299px;width:143px;height:15px;background:linear-gradient(#b7cae6,#dbe5f4 60%,#eef3fb);"></div>
<div class="a t" style="left:1476px;top:299.20px;font:bold 11px 'Liberation Serif', serif;color:#000;">Funções</div>
<div class="a" style="left:1606px;top:301px;width:9px;height:9px;box-sizing:border-box;border:1px solid #000;background:#fff;"></div>
<div class="a" style="left:1608px;top:305px;width:5px;height:1.5px;background:#000;"></div>
<div class="a" style="left:1474px;top:375px;width:143px;height:1px;background:#1e1e1e;"></div>
<div class="a t" style="left:1469.5px;top:315.7px;width:30px;height:18px;line-height:18px;text-align:center;font:13px 'Liberation Serif', serif;color:#000">log</div>
<div class="a t" style="left:1493.7px;top:315.7px;width:30px;height:18px;line-height:18px;text-align:center;font:13px 'Liberation Serif', serif;color:#000">sign</div>
<div class="a t" style="left:1517.9px;top:315.7px;width:30px;height:18px;line-height:18px;text-align:center;font:13px 'Liberation Serif', serif;color:#000">sin</div>
<div class="a t" style="left:1541.3px;top:315.7px;width:30px;height:18px;line-height:18px;text-align:center;font:13px 'Liberation Serif', serif;color:#000">cos</div>
<div class="a t" style="left:1469.5px;top:335.7px;width:30px;height:18px;line-height:18px;text-align:center;font:13px 'Liberation Serif', serif;color:#000">ln</div>
<div class="a t" style="left:1493.7px;top:335.7px;width:30px;height:18px;line-height:18px;text-align:center;font:13px 'Liberation Serif', serif;color:#000">arg</div>
<div class="a t" style="left:1517.9px;top:335.7px;width:30px;height:18px;line-height:18px;text-align:center;font:13px 'Liberation Serif', serif;color:#000">tan</div>
<div class="a t" style="left:1541.3px;top:335.7px;width:30px;height:18px;line-height:18px;text-align:center;font:13px 'Liberation Serif', serif;color:#000">cot</div>
<div class="a t" style="left:1469.5px;top:355.4px;width:30px;height:18px;line-height:18px;text-align:center;font:13px 'Liberation Serif', serif;color:#000">exp</div>
<svg class="a" style="left:1474px;top:314px;" width="144" height="60" viewBox="0 0 144 60"><g fill="#000"><rect x="105.2" y="4.0" width="2.8" height="2.3"/><path d="M1585 321.2 H1576.6 L1580.5 323.8 L1576.6 326.4 H1585" transform="translate(-1474,-314)" fill="none" stroke="#000" stroke-width="1.2"/><rect x="100.9" y="14.0" width="2.8" height="2.0"/><rect x="105.2" y="14.0" width="2.8" height="2.0"/><rect x="109.5" y="14.0" width="2.8" height="2.0"/><rect x="129.1" y="4.0" width="2.8" height="2.3"/><rect x="125.8" y="7.0" width="9.8" height="1.6"/><rect x="127.0" y="7.0" width="1.5" height="6.0"/><rect x="133.0" y="7.0" width="1.5" height="6.0"/><rect x="125.1" y="14.0" width="2.8" height="2.0"/><rect x="129.1" y="14.0" width="2.8" height="2.0"/><rect x="133.1" y="14.0" width="2.8" height="2.0"/><path d="M1580.9 337 V341.6 M1580.9 340 C1580 338.5 1578.2 338.8 1578.2 340 C1578.2 341.6 1580 341.6 1580.9 340.5" transform="translate(-1474,-314)" fill="none" stroke="#000" stroke-width="1"/><rect x="100.9" y="29.0" width="11.1" height="1.2"/><path d="M1579.5 345.6 V349.9 M1579.5 348.3 C1578.6 346.8 1577 347 1577 348.3 C1577 349.9 1578.6 349.9 1579.5 348.8" transform="translate(-1474,-314)" fill="none" stroke="#000" stroke-width="1"/><rect x="108.0" y="31.9" width="3.0" height="4.0"/><rect x="127.9" y="23.0" width="2.1" height="1.9"/><path d="M1606 340.3 C1604 339.5 1604 341 1603.7 343.5 C1603.4 346 1603.2 347.5 1601 346.5" transform="translate(-1474,-314)" fill="none" stroke="#000" stroke-width="1"/><rect x="133.1" y="27.9" width="2.2" height="3.1"/><rect x="128.8" y="34.0" width="2.2" height="2.0"/><path d="M1508.5 357.8 C1506 357.8 1507 362 1505.5 363.5 C1507 365 1506 369.2 1508.5 369.2" transform="translate(-1474,-314)" fill="none" stroke="#000" stroke-width="1.1"/><rect x="36.0" y="46.0" width="2.0" height="3.5"/><rect x="36.0" y="51.0" width="2.0" height="3.5"/></g></svg>
<div class="a" style="left:1474px;top:375px;width:143px;height:1px;background:#1e1e1e;"></div>
<div class="a" style="left:1474px;top:376px;width:143px;height:15px;background:linear-gradient(#b7cae6,#dbe5f4 60%,#eef3fb);"></div>
<div class="a t" style="left:1476px;top:376.20px;font:bold 11px 'Liberation Serif', serif;color:#000;">Gráficos</div>
<div class="a" style="left:1606px;top:378px;width:9px;height:9px;box-sizing:border-box;border:1px solid #000;background:#fff;"></div>
<div class="a" style="left:1608px;top:382px;width:5px;height:1.5px;background:#000;"></div>
<div class="a" style="left:1474px;top:410px;width:143px;height:1px;background:#1e1e1e;"></div>
<svg class="a" style="left:1474px;top:390px;" width="144" height="18" viewBox="0 0 144 18"><g fill="#000"><path d="M1480 403 A5.6 5.6 0 1 1 1485 405" transform="translate(-1474,-390)" fill="none" stroke="#000" stroke-width="1.2"/><path d="M1478.2 404.5 L1481.5 400.8 L1482.3 405.2 Z" transform="translate(-1474,-390)" fill="#000" stroke="#000" stroke-width="0.8"/><path d="M1508 393.5 L1503.5 399 H1506.6 V403.5 H1509.4 V399 H1512.5 Z" transform="translate(-1474,-390)" fill="#000" stroke="#000" stroke-width="0.6"/><rect x="32.5" y="13.0" width="3.0" height="2.4"/><path d="M1532.6 394 V405 M1527 399.5 H1538.5 M1530.5 396 L1532.6 394 L1534.7 396 M1530.5 403 L1532.6 405 L1534.7 403 M1529 397.4 L1527 399.5 L1529 401.6 M1536.3 397.4 L1538.4 399.5 L1536.3 401.6" transform="translate(-1474,-390)" fill="none" stroke="#000" stroke-width="1.1"/><rect x="78.0" y="5.5" width="1.0" height="1.0"/><rect x="81.0" y="5.5" width="1.0" height="1.0"/><rect x="84.0" y="5.5" width="1.0" height="1.0"/><rect x="87.0" y="5.5" width="1.0" height="1.0"/><rect x="78.0" y="9.0" width="1.0" height="1.0"/><rect x="81.0" y="9.0" width="1.0" height="1.0"/><rect x="84.0" y="9.0" width="1.0" height="1.0"/><rect x="87.0" y="9.0" width="1.0" height="1.0"/><rect x="78.0" y="12.5" width="1.0" height="1.0"/><rect x="81.0" y="12.5" width="1.0" height="1.0"/><rect x="84.0" y="12.5" width="1.0" height="1.0"/><rect x="87.0" y="12.5" width="1.0" height="1.0"/><rect x="101.5" y="5.5" width="10.2" height="1.4"/><rect x="101.5" y="8.6" width="10.2" height="1.4"/><rect x="101.5" y="11.7" width="10.2" height="1.4"/><path d="M1600.8 400.5 C1601.5 395.5 1606 394 1609.5 397" transform="translate(-1474,-390)" fill="none" stroke="#000" stroke-width="1.2"/><path d="M1609.2 399.5 C1608.5 404.5 1604 406 1600.5 403" transform="translate(-1474,-390)" fill="none" stroke="#000" stroke-width="1.2"/><path d="M1607.2 397.2 L1611.5 396.2 L1609.8 400.2 Z" transform="translate(-1474,-390)" fill="#000" stroke="#000" stroke-width="0.6"/><path d="M1602.8 402.8 L1598.5 403.8 L1600.2 399.8 Z" transform="translate(-1474,-390)" fill="#000" stroke="#000" stroke-width="0.6"/></g></svg>
<div class="a" style="left:1474px;top:410px;width:143px;height:1px;background:#1e1e1e;"></div>
<div class="a" style="left:1474px;top:411px;width:143px;height:15px;background:linear-gradient(#b7cae6,#dbe5f4 60%,#eef3fb);"></div>
<div class="a t" style="left:1476px;top:411.20px;font:bold 11px 'Liberation Serif', serif;color:#000;">Programação</div>
<div class="a" style="left:1606px;top:413px;width:9px;height:9px;box-sizing:border-box;border:1px solid #000;background:#fff;"></div>
<div class="a" style="left:1608px;top:417px;width:5px;height:1.5px;background:#000;"></div>
<div class="a" style="left:1474px;top:465px;width:143px;height:1px;background:#1e1e1e;"></div>
<div class="a t" style="left:1469px;top:427.7px;width:30px;height:18px;line-height:18px;text-align:center;font:13px 'Liberation Serif', serif;color:#000">if</div>
<div class="a t" style="left:1494px;top:427.7px;width:30px;height:18px;line-height:18px;text-align:center;font:13px 'Liberation Serif', serif;color:#000">for</div>
<div class="a t" style="left:1530px;top:427.7px;width:30px;height:18px;line-height:18px;text-align:center;font:13px 'Liberation Serif', serif;color:#000">try</div>
<div class="a t" style="left:1578px;top:427.7px;width:30px;height:18px;line-height:18px;text-align:center;font:13px 'Liberation Serif', serif;color:#000">line</div>
<div class="a t" style="left:1466px;top:446px;width:60px;height:18px;line-height:18px;text-align:center;font:13px 'Liberation Serif', serif">while</div>
<div class="a t" style="left:1516px;top:446px;width:60px;height:18px;line-height:18px;text-align:center;font:13px 'Liberation Serif', serif">continue</div>
<div class="a t" style="left:1563px;top:446px;width:60px;height:18px;line-height:18px;text-align:center;font:13px 'Liberation Serif', serif">break</div>
<div class="a" style="left:1474px;top:465px;width:143px;height:1px;background:#1e1e1e;"></div>
<div class="a" style="left:1474px;top:466px;width:143px;height:15px;background:linear-gradient(#b7cae6,#dbe5f4 60%,#eef3fb);"></div>
<div class="a t" style="left:1476px;top:466.20px;font:bold 11px 'Liberation Serif', serif;color:#000;">Símbolos (α-ω)</div>
<div class="a" style="left:1606px;top:468px;width:9px;height:9px;box-sizing:border-box;border:1px solid #000;background:#fff;"></div>
<div class="a" style="left:1608px;top:472px;width:5px;height:1.5px;background:#000;"></div>
<div class="a" style="left:1474px;top:582px;width:143px;height:1px;background:#1e1e1e;"></div>
<div class="a t" style="left:1469.5px;top:485.7px;width:30px;height:18px;line-height:18px;text-align:center;font:12px 'Liberation Serif', serif;color:#000">α</div>
<div class="a t" style="left:1493.7px;top:485.7px;width:30px;height:18px;line-height:18px;text-align:center;font:12px 'Liberation Serif', serif;color:#000">β</div>
<div class="a t" style="left:1517.9px;top:485.7px;width:30px;height:18px;line-height:18px;text-align:center;font:12px 'Liberation Serif', serif;color:#000">γ</div>
<div class="a t" style="left:1541.3px;top:485.7px;width:30px;height:18px;line-height:18px;text-align:center;font:12px 'Liberation Serif', serif;color:#000">δ</div>
<div class="a t" style="left:1565.8px;top:485.7px;width:30px;height:18px;line-height:18px;text-align:center;font:12px 'Liberation Serif', serif;color:#000">ε</div>
<div class="a t" style="left:1589.4px;top:485.7px;width:30px;height:18px;line-height:18px;text-align:center;font:12px 'Liberation Serif', serif;color:#000">ζ</div>
<div class="a t" style="left:1469.5px;top:505.7px;width:30px;height:18px;line-height:18px;text-align:center;font:12px 'Liberation Serif', serif;color:#000">η</div>
<div class="a t" style="left:1493.7px;top:505.7px;width:30px;height:18px;line-height:18px;text-align:center;font:12px 'Liberation Serif', serif;color:#000">ϑ</div>
<div class="a t" style="left:1517.9px;top:505.7px;width:30px;height:18px;line-height:18px;text-align:center;font:12px 'Liberation Serif', serif;color:#000">θ</div>
<div class="a t" style="left:1541.3px;top:505.7px;width:30px;height:18px;line-height:18px;text-align:center;font:12px 'Liberation Serif', serif;color:#000">ι</div>
<div class="a t" style="left:1565.8px;top:505.7px;width:30px;height:18px;line-height:18px;text-align:center;font:12px 'Liberation Serif', serif;color:#000">κ</div>
<div class="a t" style="left:1589.4px;top:505.7px;width:30px;height:18px;line-height:18px;text-align:center;font:12px 'Liberation Serif', serif;color:#000">λ</div>
<div class="a t" style="left:1469.5px;top:526.0px;width:30px;height:18px;line-height:18px;text-align:center;font:12px 'Liberation Serif', serif;color:#000">μ</div>
<div class="a t" style="left:1493.7px;top:526.0px;width:30px;height:18px;line-height:18px;text-align:center;font:12px 'Liberation Serif', serif;color:#000">ν</div>
<div class="a t" style="left:1517.9px;top:526.0px;width:30px;height:18px;line-height:18px;text-align:center;font:12px 'Liberation Serif', serif;color:#000">ξ</div>
<div class="a t" style="left:1541.3px;top:526.0px;width:30px;height:18px;line-height:18px;text-align:center;font:12px 'Liberation Serif', serif;color:#000">ο</div>
<div class="a t" style="left:1565.8px;top:526.0px;width:30px;height:18px;line-height:18px;text-align:center;font:12px 'Liberation Serif', serif;color:#000">π</div>
<div class="a t" style="left:1589.4px;top:526.0px;width:30px;height:18px;line-height:18px;text-align:center;font:12px 'Liberation Serif', serif;color:#000">ρ</div>
<div class="a t" style="left:1469.5px;top:546.0px;width:30px;height:18px;line-height:18px;text-align:center;font:12px 'Liberation Serif', serif;color:#000">σ</div>
<div class="a t" style="left:1493.7px;top:546.0px;width:30px;height:18px;line-height:18px;text-align:center;font:12px 'Liberation Serif', serif;color:#000">τ</div>
<div class="a t" style="left:1517.9px;top:546.0px;width:30px;height:18px;line-height:18px;text-align:center;font:12px 'Liberation Serif', serif;color:#000">υ</div>
<div class="a t" style="left:1541.3px;top:546.0px;width:30px;height:18px;line-height:18px;text-align:center;font:12px 'Liberation Serif', serif;color:#000">φ</div>
<div class="a t" style="left:1565.8px;top:546.0px;width:30px;height:18px;line-height:18px;text-align:center;font:12px 'Liberation Serif', serif;color:#000">ϕ</div>
<div class="a t" style="left:1589.4px;top:546.0px;width:30px;height:18px;line-height:18px;text-align:center;font:12px 'Liberation Serif', serif;color:#000">χ</div>
<div class="a t" style="left:1469.5px;top:565.7px;width:30px;height:18px;line-height:18px;text-align:center;font:12px 'Liberation Serif', serif;color:#000">ψ</div>
<div class="a t" style="left:1493.7px;top:565.7px;width:30px;height:18px;line-height:18px;text-align:center;font:12px 'Liberation Serif', serif;color:#000">ω</div>
<div class="a" style="left:1474px;top:582px;width:143px;height:1px;background:#1e1e1e;"></div>
<div class="a" style="left:1474px;top:583px;width:143px;height:15px;background:linear-gradient(#b7cae6,#dbe5f4 60%,#eef3fb);"></div>
<div class="a t" style="left:1476px;top:583.20px;font:bold 11px 'Liberation Serif', serif;color:#000;">Símbolos (A-Ω)</div>
<div class="a" style="left:1606px;top:585px;width:9px;height:9px;box-sizing:border-box;border:1px solid #000;background:#fff;"></div>
<div class="a" style="left:1608px;top:589px;width:5px;height:1.5px;background:#000;"></div>
<div class="a" style="left:1474px;top:678px;width:143px;height:1px;background:#1e1e1e;"></div>
<div class="a t" style="left:1469.5px;top:601.5px;width:30px;height:18px;line-height:18px;text-align:center;font:12px 'Liberation Mono', monospace;color:#000">Α</div>
<div class="a t" style="left:1493.7px;top:601.5px;width:30px;height:18px;line-height:18px;text-align:center;font:12px 'Liberation Mono', monospace;color:#000">Β</div>
<div class="a t" style="left:1517.9px;top:601.5px;width:30px;height:18px;line-height:18px;text-align:center;font:12px 'Liberation Mono', monospace;color:#000">Γ</div>
<div class="a t" style="left:1541.3px;top:601.5px;width:30px;height:18px;line-height:18px;text-align:center;font:12px 'Liberation Mono', monospace;color:#000">Δ</div>
<div class="a t" style="left:1565.8px;top:601.5px;width:30px;height:18px;line-height:18px;text-align:center;font:12px 'Liberation Mono', monospace;color:#000">Ε</div>
<div class="a t" style="left:1589.4px;top:601.5px;width:30px;height:18px;line-height:18px;text-align:center;font:12px 'Liberation Mono', monospace;color:#000">Ζ</div>
<div class="a t" style="left:1469.5px;top:621.6px;width:30px;height:18px;line-height:18px;text-align:center;font:12px 'Liberation Mono', monospace;color:#000">Η</div>
<div class="a t" style="left:1493.7px;top:621.6px;width:30px;height:18px;line-height:18px;text-align:center;font:12px 'Liberation Mono', monospace;color:#000">Θ</div>
<div class="a t" style="left:1517.9px;top:621.6px;width:30px;height:18px;line-height:18px;text-align:center;font:12px 'Liberation Mono', monospace;color:#000">Ι</div>
<div class="a t" style="left:1541.3px;top:621.6px;width:30px;height:18px;line-height:18px;text-align:center;font:12px 'Liberation Mono', monospace;color:#000">Κ</div>
<div class="a t" style="left:1565.8px;top:621.6px;width:30px;height:18px;line-height:18px;text-align:center;font:12px 'Liberation Mono', monospace;color:#000">Λ</div>
<div class="a t" style="left:1589.4px;top:621.6px;width:30px;height:18px;line-height:18px;text-align:center;font:12px 'Liberation Mono', monospace;color:#000">Μ</div>
<div class="a t" style="left:1469.5px;top:641.7px;width:30px;height:18px;line-height:18px;text-align:center;font:12px 'Liberation Mono', monospace;color:#000">Ν</div>
<div class="a t" style="left:1493.7px;top:641.7px;width:30px;height:18px;line-height:18px;text-align:center;font:12px 'Liberation Mono', monospace;color:#000">Ξ</div>
<div class="a t" style="left:1517.9px;top:641.7px;width:30px;height:18px;line-height:18px;text-align:center;font:12px 'Liberation Mono', monospace;color:#000">Ο</div>
<div class="a t" style="left:1541.3px;top:641.7px;width:30px;height:18px;line-height:18px;text-align:center;font:12px 'Liberation Mono', monospace;color:#000">Π</div>
<div class="a t" style="left:1565.8px;top:641.7px;width:30px;height:18px;line-height:18px;text-align:center;font:12px 'Liberation Mono', monospace;color:#000">Ρ</div>
<div class="a t" style="left:1589.4px;top:641.7px;width:30px;height:18px;line-height:18px;text-align:center;font:12px 'Liberation Mono', monospace;color:#000">Σ</div>
<div class="a t" style="left:1469.5px;top:661.8000000000001px;width:30px;height:18px;line-height:18px;text-align:center;font:12px 'Liberation Mono', monospace;color:#000">Τ</div>
<div class="a t" style="left:1493.7px;top:661.8000000000001px;width:30px;height:18px;line-height:18px;text-align:center;font:12px 'Liberation Mono', monospace;color:#000">Υ</div>
<div class="a t" style="left:1517.9px;top:661.8000000000001px;width:30px;height:18px;line-height:18px;text-align:center;font:12px 'Liberation Mono', monospace;color:#000">Φ</div>
<div class="a t" style="left:1541.3px;top:661.8000000000001px;width:30px;height:18px;line-height:18px;text-align:center;font:12px 'Liberation Mono', monospace;color:#000">Χ</div>
<div class="a t" style="left:1565.8px;top:661.8000000000001px;width:30px;height:18px;line-height:18px;text-align:center;font:12px 'Liberation Mono', monospace;color:#000">Ψ</div>
<div class="a t" style="left:1589.4px;top:661.8000000000001px;width:30px;height:18px;line-height:18px;text-align:center;font:12px 'Liberation Mono', monospace;color:#000">Ω</div>
<div class="a t" style="left:580px;top:127.50px;font:bold 37px 'Liberation Sans', sans-serif;color:#000;transform:scaleX(0.9332);transform-origin:0 0;-webkit-text-stroke:1.1px #000;">PEREIRA</div>
<div class="a t" style="left:579.5px;top:152.30px;font:39px 'Liberation Sans', sans-serif;color:#555555;transform:scaleX(0.9530);transform-origin:0 0;">santos</div>
<div class="a" style="left:693px;top:183px;width:4px;height:4px;background:#e8101a;"></div>
<div class="a t" style="left:578px;top:192.40px;font:bold 11.5px 'Liberation Sans', sans-serif;color:#1a1a1a;transform:scaleX(0.9700);transform-origin:0 0;-webkit-text-stroke:0.35px #1a1a1a;">CONSULTORIA E ENGENHARIA</div>
<div class="a t" style="left:760.5px;top:132.80px;font:bold 16.5px 'Liberation Sans', sans-serif;color:#000;transform:scaleX(1.0351);transform-origin:0 0;">PROJETO:</div>
<div class="a t" style="left:760.5px;top:180.70px;font:bold 16.5px 'Liberation Sans', sans-serif;color:#000;transform:scaleX(1.0422);transform-origin:0 0;">ASSUNTO:</div>
<div class="a t" style="left:1233px;top:181.40px;font:bold 16.5px 'Liberation Sans', sans-serif;color:#000;transform:scaleX(1.0905);transform-origin:0 0;">REV:</div>
<div class="a t" style="left:1305.5px;top:182.80px;font:13px 'Liberation Sans', sans-serif;color:#000;letter-spacing:2px;transform:scaleX(1.0017);transform-origin:0 0;">00</div>
<div class="a" style="left:760px;top:166px;width:580px;height:1px;background:#000;"></div>
<div class="a" style="left:577px;top:218px;width:765px;height:1px;background:#000;"></div>
<div class="a" style="left:863px;top:140px;width:8px;height:8px;background:#c8c4c6;"></div>
<div class="a" style="left:871px;top:140px;width:8px;height:8px;background:#d4d4d6;"></div>
<div class="a" style="left:879px;top:140px;width:8px;height:8px;background:#dddcda;"></div>
<div class="a" style="left:887px;top:140px;width:8px;height:8px;background:#d0d0d1;"></div>
<div class="a" style="left:895px;top:140px;width:8px;height:8px;background:#cdced1;"></div>
<div class="a" style="left:903px;top:140px;width:8px;height:8px;background:#fdfdfd;"></div>
<div class="a" style="left:911px;top:140px;width:8px;height:8px;background:#e2e2e4;"></div>
<div class="a" style="left:927px;top:140px;width:8px;height:8px;background:#d1cccc;"></div>
<div class="a" style="left:935px;top:140px;width:8px;height:8px;background:#bfbfbf;"></div>
<div class="a" style="left:943px;top:140px;width:8px;height:8px;background:#d4d0cc;"></div>
<div class="a" style="left:951px;top:140px;width:8px;height:8px;background:#c0c6cd;"></div>
<div class="a" style="left:959px;top:140px;width:8px;height:8px;background:#b7b6b2;"></div>
<div class="a" style="left:967px;top:140px;width:8px;height:8px;background:#aeb0b3;"></div>
<div class="a" style="left:975px;top:140px;width:8px;height:8px;background:#a9a8ad;"></div>
<div class="a" style="left:991px;top:140px;width:8px;height:8px;background:#cdc8ca;"></div>
<div class="a" style="left:999px;top:140px;width:8px;height:8px;background:#bdbdbb;"></div>
<div class="a" style="left:1007px;top:140px;width:8px;height:8px;background:#cfcfd1;"></div>
<div class="a" style="left:1015px;top:140px;width:8px;height:8px;background:#c4bec4;"></div>
<div class="a" style="left:1023px;top:140px;width:8px;height:8px;background:#b8b8b6;"></div>
<div class="a" style="left:1031px;top:140px;width:8px;height:8px;background:#b8bbbf;"></div>
<div class="a" style="left:1039px;top:140px;width:8px;height:8px;background:#a4a4a4;"></div>
<div class="a" style="left:863px;top:164px;width:184px;height:8px;background:#dddddd;"></div>
<div class="a" style="left:863px;top:180px;width:8px;height:8px;background:#e0dfdc;"></div>
<div class="a" style="left:871px;top:180px;width:8px;height:8px;background:#f3f6f9;"></div>
<div class="a" style="left:887px;top:180px;width:8px;height:8px;background:#fcfcfb;"></div>
<div class="a" style="left:895px;top:180px;width:8px;height:8px;background:#f1f1f4;"></div>
<div class="a" style="left:903px;top:180px;width:8px;height:8px;background:#e2e2e3;"></div>
<div class="a" style="left:911px;top:180px;width:8px;height:8px;background:#f3f2ef;"></div>
<div class="a" style="left:943px;top:180px;width:8px;height:8px;background:#efeeeb;"></div>
<div class="a" style="left:951px;top:180px;width:8px;height:8px;background:#eff0f2;"></div>
<div class="a" style="left:975px;top:180px;width:8px;height:8px;background:#ebe9ec;"></div>
<div class="a" style="left:999px;top:180px;width:8px;height:8px;background:#ebe9e7;"></div>
<div class="a" style="left:1007px;top:180px;width:8px;height:8px;background:#e5e3e4;"></div>
<div class="a" style="left:1015px;top:180px;width:8px;height:8px;background:#e5e4e2;"></div>
<div class="a" style="left:1023px;top:180px;width:8px;height:8px;background:#e3e3e4;"></div>
<div class="a" style="left:1031px;top:180px;width:8px;height:8px;background:#dcdcde;"></div>
<div class="a" style="left:863px;top:188px;width:8px;height:8px;background:#d4d4d5;"></div>
<div class="a" style="left:871px;top:188px;width:8px;height:8px;background:#bcb8b5;"></div>
<div class="a" style="left:879px;top:188px;width:8px;height:8px;background:#b6b3b8;"></div>
<div class="a" style="left:887px;top:188px;width:8px;height:8px;background:#d3d3d3;"></div>
<div class="a" style="left:895px;top:188px;width:8px;height:8px;background:#d4d3cf;"></div>
<div class="a" style="left:903px;top:188px;width:8px;height:8px;background:#c3c2c7;"></div>
<div class="a" style="left:911px;top:188px;width:8px;height:8px;background:#c6c8cb;"></div>
<div class="a" style="left:919px;top:188px;width:8px;height:8px;background:#bab6b8;"></div>
<div class="a" style="left:927px;top:188px;width:8px;height:8px;background:#aea8a5;"></div>
<div class="a" style="left:935px;top:188px;width:8px;height:8px;background:#b8bcc0;"></div>
<div class="a" style="left:943px;top:188px;width:8px;height:8px;background:#b4b4b2;"></div>
<div class="a" style="left:951px;top:188px;width:8px;height:8px;background:#aeb3b5;"></div>
<div class="a" style="left:959px;top:188px;width:8px;height:8px;background:#cacace;"></div>
<div class="a" style="left:975px;top:188px;width:8px;height:8px;background:#aba7ab;"></div>
<div class="a" style="left:983px;top:188px;width:8px;height:8px;background:#a5a5a3;"></div>
<div class="a" style="left:991px;top:188px;width:8px;height:8px;background:#fcfdff;"></div>
<div class="a" style="left:999px;top:188px;width:8px;height:8px;background:#e8e5e2;"></div>
<div class="a" style="left:1007px;top:188px;width:8px;height:8px;background:#cdcbcd;"></div>
<div class="a" style="left:1015px;top:188px;width:8px;height:8px;background:#cbcbcc;"></div>
<div class="a" style="left:1023px;top:188px;width:8px;height:8px;background:#cdd0ce;"></div>
<div class="a" style="left:1031px;top:188px;width:8px;height:8px;background:#bbbac1;"></div>
<div class="a" style="left:935px;top:196px;width:8px;height:8px;background:#f1f1f1;"></div>
<div class="a" style="left:943px;top:196px;width:8px;height:8px;background:#fbfcfd;"></div>
<div class="a" style="left:860px;top:136px;width:190px;height:3.6px;overflow:hidden"><div class="a t" style="left:4px;top:0.6px;font:12.5px 'Liberation Mono', monospace;letter-spacing:1.7px;color:#000">2159 - Golden Palace</div></div>
<div class="a" style="left:572px;top:225px;width:773px;height:800px;box-sizing:border-box;border:1px solid #ececec;background:none;"></div>
<div class="a t" style="left:578px;top:229.20px;font:bold 19.8px 'Liberation Sans', sans-serif;color:#000;transform:scaleX(1.0059);transform-origin:0 0;">Coeficientes de Ponderação</div>
<div class="a t" style="left:578px;top:260.70px;font:italic 15px 'Liberation Sans', sans-serif;color:#000;word-spacing:1.414px;">Coeficientes de Ponderação do Concreto</div>
<div class="a t" style="left:578px;top:303.00px;font:italic 15px 'Liberation Sans', sans-serif;color:#000;word-spacing:1.780px;">Coeficientes de Ponderação do Aço</div>
<div class="a t" style="left:578px;top:343.80px;font:italic 15px 'Liberation Sans', sans-serif;color:#000;word-spacing:1.644px;">Coeficientes de Ponderação das Ações</div>
<div class="a t" style="left:578px;top:374.20px;font:bold 19.8px 'Liberation Sans', sans-serif;color:#000;transform:scaleX(1.0144);transform-origin:0 0;">Materiais</div>
<div class="a t" style="left:578px;top:405.50px;font:bold 16px 'Liberation Sans', sans-serif;color:#000;transform:scaleX(1.0394);transform-origin:0 0;">Concreto</div>
<div class="a t" style="left:578px;top:435.60px;font:italic 15px 'Liberation Sans', sans-serif;color:#000;word-spacing:1.724px;">Redistribuição de momentos (Δ)</div>
<div class="a t" style="left:578px;top:468.20px;font:italic 15px 'Liberation Sans', sans-serif;color:#000;word-spacing:1.700px;">Resistência característica do concreto à compressão:</div>
<div class="a t" style="left:578px;top:520.00px;font:italic 15px 'Liberation Sans', sans-serif;color:#000;word-spacing:1.347px;">Resistência de projeto do concreto à compressão:</div>
<div class="a t" style="left:578px;top:572.00px;font:italic 15px 'Liberation Sans', sans-serif;color:#000;word-spacing:1.633px;">Fator de eficiência:</div>
<div class="a t" style="left:578px;top:623.20px;font:italic 15px 'Liberation Sans', sans-serif;color:#000;word-spacing:1.389px;">Resistência média do concreto à tração:</div>
<div class="a t" style="left:578px;top:685.50px;font:italic 15px 'Liberation Sans', sans-serif;color:#000;word-spacing:1.417px;">Resistência característica inferior à tração do concreto:</div>
<div class="a t" style="left:578px;top:737.40px;font:italic 15px 'Liberation Sans', sans-serif;color:#000;word-spacing:1.543px;">Resistência característica superior à tração do concreto:</div>
<div class="a t" style="left:578px;top:789.30px;font:italic 15px 'Liberation Sans', sans-serif;color:#000;word-spacing:1.181px;">Resistência de projeto do concreto à tração:</div>
<div class="a t" style="left:578px;top:841.20px;font:italic 15px 'Liberation Sans', sans-serif;color:#000;word-spacing:5.295px;">Parâmetro em função da natureza do agregado que</div>
<div class="a t" style="left:578px;top:860.70px;font:italic 15px 'Liberation Sans', sans-serif;color:#000;word-spacing:1.461px;">influencia o módulo de elasticidade:</div>
<div class="a t" style="left:578px;top:902.20px;font:italic 15px 'Liberation Sans', sans-serif;color:#000;word-spacing:0.835px;">Módulo de elasticidade ou módulo de deformação</div>
<div class="a t" style="left:578px;top:923.00px;font:italic 15px 'Liberation Sans', sans-serif;color:#000;word-spacing:1.292px;">tangente inicial do concreto, referindo-se sempre ao</div>
<div class="a" style="left:574px;top:256px;width:292px;height:38px;box-sizing:border-box;border:3px solid #ff0000;background:none;"></div>
<svg class="a" style="left:195px;top:85px;" width="380" height="190" viewBox="0 0 380 190"><line x1="372" y1="181" x2="25" y2="16" stroke="#ff0000" stroke-width="3.4"/><path d="M9.3 9.4 L34 12.3 L27.1 26 Z" fill="#ff0000"/></svg>
<div class="a" style="left:576px;top:499px;width:11px;height:10px;box-sizing:border-box;border:1px solid #333;background:#fff;"></div>
<div class="a" style="left:578px;top:503px;width:7px;height:1px;background:#000;"></div>
<div class="a" style="left:581px;top:501px;width:1px;height:6px;background:#000;"></div>
<div class="a" style="left:587px;top:503px;width:13px;height:1px;background:#000;"></div>
<div class="a t" style="left:600.5px;top:497.40px;font:12px 'Liberation Mono', monospace;color:#000;transform:scaleX(1.0206);transform-origin:0 0;">Algoritmos</div>
<div class="a" style="left:680px;top:503px;width:658px;height:1px;background:#000;"></div>
<div class="a" style="left:1031px;top:249px;width:70px;height:27px;background:#fff97f;"></div>
<div class="a" style="left:1031px;top:291px;width:79px;height:26px;background:#fff97f;"></div>
<div class="a" style="left:1031px;top:332px;width:70px;height:26px;background:#fff97f;"></div>
<div class="a" style="left:1031px;top:435px;width:63px;height:20px;background:#fff97f;"></div>
<div class="a" style="left:1031px;top:467px;width:101px;height:26px;background:#fff97f;"></div>
<div class="a t" style="left:1032.93px;top:253.80px;font:italic 13.5px 'Liberation Mono', monospace;color:#000;-webkit-text-stroke:0.25px #000;">Y</div>
<div class="a t" style="left:1042.33px;top:260.00px;font:italic 12.3px 'Liberation Mono', monospace;color:#000;letter-spacing:0.25px;-webkit-text-stroke:0.25px #000;">c</div>
<div class="a" style="left:1056.3px;top:256.8px;width:1.6px;height:1.6px;background:#111;"></div>
<div class="a" style="left:1056.3px;top:260.8px;width:1.6px;height:1.6px;background:#111;"></div>
<div class="a" style="left:1060px;top:257px;width:9px;height:1px;background:#000;"></div>
<div class="a" style="left:1060px;top:261px;width:9px;height:1px;background:#000;"></div>
<div class="a t" style="left:1072.9px;top:253.00px;font:12.5px 'Liberation Mono', monospace;color:#000;letter-spacing:1.7px;-webkit-text-stroke:0.25px #000;">1,4</div>
<div class="a t" style="left:1032.93px;top:295.80px;font:italic 13.5px 'Liberation Mono', monospace;color:#000;-webkit-text-stroke:0.25px #000;">Y</div>
<div class="a t" style="left:1042.34px;top:302.00px;font:italic 12.3px 'Liberation Mono', monospace;color:#000;letter-spacing:0.25px;-webkit-text-stroke:0.25px #000;">s</div>
<div class="a" style="left:1056.3px;top:298.8px;width:1.6px;height:1.6px;background:#111;"></div>
<div class="a" style="left:1056.3px;top:302.8px;width:1.6px;height:1.6px;background:#111;"></div>
<div class="a" style="left:1060px;top:299px;width:9px;height:1px;background:#000;"></div>
<div class="a" style="left:1060px;top:303px;width:9px;height:1px;background:#000;"></div>
<div class="a t" style="left:1072.9px;top:295.00px;font:12.5px 'Liberation Mono', monospace;color:#000;letter-spacing:1.7px;-webkit-text-stroke:0.25px #000;">1,15</div>
<div class="a t" style="left:1032.93px;top:336.80px;font:italic 13.5px 'Liberation Mono', monospace;color:#000;-webkit-text-stroke:0.25px #000;">Y</div>
<div class="a t" style="left:1041.7px;top:343.00px;font:italic 12.3px 'Liberation Mono', monospace;color:#000;letter-spacing:0.25px;-webkit-text-stroke:0.25px #000;">f</div>
<div class="a" style="left:1056.3px;top:339.8px;width:1.6px;height:1.6px;background:#111;"></div>
<div class="a" style="left:1056.3px;top:343.8px;width:1.6px;height:1.6px;background:#111;"></div>
<div class="a" style="left:1060px;top:340px;width:9px;height:1px;background:#000;"></div>
<div class="a" style="left:1060px;top:344px;width:9px;height:1px;background:#000;"></div>
<div class="a t" style="left:1072.9px;top:336.00px;font:12.5px 'Liberation Mono', monospace;color:#000;letter-spacing:1.7px;-webkit-text-stroke:0.25px #000;">1,4</div>
<div class="a t" style="left:1034.1px;top:439.10px;font:italic 11px 'Liberation Mono', monospace;color:#000;-webkit-text-stroke:0.25px #000;">Δ</div>
<div class="a" style="left:1047.8999999999999px;top:443.8px;width:1.6px;height:1.6px;background:#111;"></div>
<div class="a" style="left:1047.8999999999999px;top:447.8px;width:1.6px;height:1.6px;background:#111;"></div>
<div class="a" style="left:1051.6px;top:444px;width:9.400000000000091px;height:1px;background:#000;"></div>
<div class="a" style="left:1051.6px;top:448px;width:9.400000000000091px;height:1px;background:#000;"></div>
<div class="a t" style="left:1065.34px;top:440.00px;font:12.5px 'Liberation Mono', monospace;color:#000;letter-spacing:1.7px;-webkit-text-stroke:0.25px #000;">0,9</div>
<div class="a t" style="left:1032.68px;top:470.50px;font:italic 12.5px 'Liberation Mono', monospace;color:#000;letter-spacing:1.7px;-webkit-text-stroke:0.25px #000;">f</div>
<div class="a t" style="left:1042.13px;top:478.10px;font:italic 12.3px 'Liberation Mono', monospace;color:#000;letter-spacing:0.25px;-webkit-text-stroke:0.25px #000;">ck</div>
<div class="a" style="left:1063.1px;top:474.8px;width:1.6px;height:1.6px;background:#111;"></div>
<div class="a" style="left:1063.1px;top:478.8px;width:1.6px;height:1.6px;background:#111;"></div>
<div class="a" style="left:1066.8px;top:475px;width:8.700000000000045px;height:1px;background:#000;"></div>
<div class="a" style="left:1066.8px;top:479px;width:8.700000000000045px;height:1px;background:#000;"></div>
<div class="a t" style="left:1079.72px;top:471.00px;font:12.5px 'Liberation Mono', monospace;color:#000;letter-spacing:1.7px;-webkit-text-stroke:0.25px #000;">28</div>
<div class="a t" style="left:1102.11px;top:471.00px;font:12.5px 'Liberation Mono', monospace;color:#0000ff;transform:scaleX(1.2702);transform-origin:0 0;">MPa</div>
<div class="a t" style="left:1032.48px;top:527.00px;font:italic 12.5px 'Liberation Mono', monospace;color:#000;letter-spacing:1.7px;-webkit-text-stroke:0.25px #000;">f</div>
<div class="a t" style="left:1042.13px;top:534.70px;font:italic 12.3px 'Liberation Mono', monospace;color:#000;letter-spacing:0.25px;-webkit-text-stroke:0.25px #000;">cd</div>
<div class="a" style="left:1062.7px;top:532.3px;width:1.6px;height:1.6px;background:#111;"></div>
<div class="a" style="left:1062.7px;top:536.3px;width:1.6px;height:1.6px;background:#111;"></div>
<div class="a" style="left:1066.4px;top:532.5px;width:9.699999999999818px;height:1px;background:#000;"></div>
<div class="a" style="left:1066.4px;top:536.5px;width:9.699999999999818px;height:1px;background:#000;"></div>
<div class="a" style="left:1081px;top:534px;width:28px;height:1px;background:#000;"></div>
<div class="a t" style="left:1082.68px;top:511.00px;font:italic 12.5px 'Liberation Mono', monospace;color:#000;letter-spacing:1.7px;-webkit-text-stroke:0.25px #000;">f</div>
<div class="a t" style="left:1090.83px;top:518.80px;font:italic 12.3px 'Liberation Mono', monospace;color:#000;letter-spacing:0.25px;-webkit-text-stroke:0.25px #000;">ck</div>
<div class="a t" style="left:1086.03px;top:538.40px;font:italic 13.5px 'Liberation Mono', monospace;color:#000;-webkit-text-stroke:0.25px #000;">Y</div>
<div class="a t" style="left:1095.03px;top:545.80px;font:italic 12.3px 'Liberation Mono', monospace;color:#000;letter-spacing:0.25px;-webkit-text-stroke:0.25px #000;">c</div>
<div class="a" style="left:1114.8px;top:532.5px;width:10.0px;height:1px;background:#000;"></div>
<div class="a" style="left:1114.8px;top:536.5px;width:10.0px;height:1px;background:#000;"></div>
<div class="a t" style="left:1129.22px;top:528.30px;font:12.5px 'Liberation Mono', monospace;color:#000;letter-spacing:1.7px;-webkit-text-stroke:0.25px #000;">20</div>
<div class="a t" style="left:1151.51px;top:528.00px;font:12.5px 'Liberation Mono', monospace;color:#0000ff;transform:scaleX(1.2702);transform-origin:0 0;">MPa</div>
<div class="a t" style="left:1033.17px;top:578.60px;font:italic 12.5px 'Liberation Mono', monospace;color:#000;letter-spacing:1.7px;-webkit-text-stroke:0.25px #000;">α</div>
<div class="a t" style="left:1041.75px;top:586.50px;font:italic 12.3px 'Liberation Mono', monospace;color:#000;letter-spacing:0.25px;-webkit-text-stroke:0.25px #000;">v2</div>
<div class="a" style="left:1062.7px;top:584.3px;width:1.6px;height:1.6px;background:#111;"></div>
<div class="a" style="left:1062.7px;top:588.3px;width:1.6px;height:1.6px;background:#111;"></div>
<div class="a" style="left:1066.4px;top:584.5px;width:9.599999999999909px;height:1px;background:#000;"></div>
<div class="a" style="left:1066.4px;top:588.5px;width:9.599999999999909px;height:1px;background:#000;"></div>
<div class="a t" style="left:1080.0px;top:579.70px;font:12.5px 'Liberation Mono', monospace;color:#000;letter-spacing:1.7px;-webkit-text-stroke:0.25px #000;">1</div>
<div class="a" style="left:1093px;top:586.5px;width:8.5px;height:1px;background:#000;"></div>
<div class="a" style="left:1107px;top:586px;width:30px;height:1px;background:#000;"></div>
<div class="a t" style="left:1109.18px;top:562.70px;font:italic 12.5px 'Liberation Mono', monospace;color:#000;letter-spacing:1.7px;-webkit-text-stroke:0.25px #000;">f</div>
<div class="a t" style="left:1118.33px;top:570.70px;font:italic 12.3px 'Liberation Mono', monospace;color:#000;letter-spacing:0.25px;-webkit-text-stroke:0.25px #000;">ck</div>
<div class="a t" style="left:1108.12px;top:589.70px;font:12.5px 'Liberation Mono', monospace;color:#000;letter-spacing:1.7px;-webkit-text-stroke:0.25px #000;">250</div>
<div class="a" style="left:1141.8px;top:584.5px;width:10.0px;height:1px;background:#000;"></div>
<div class="a" style="left:1141.8px;top:588.5px;width:10.0px;height:1px;background:#000;"></div>
<div class="a t" style="left:1157.44px;top:579.70px;font:12.5px 'Liberation Mono', monospace;color:#000;letter-spacing:1.7px;-webkit-text-stroke:0.25px #000;">0,89</div>
<div class="a t" style="left:1032.68px;top:635.80px;font:italic 12.5px 'Liberation Mono', monospace;color:#000;letter-spacing:1.7px;-webkit-text-stroke:0.25px #000;">f</div>
<div class="a t" style="left:1042.03px;top:642.80px;font:italic 12.3px 'Liberation Mono', monospace;color:#000;letter-spacing:0.25px;-webkit-text-stroke:0.25px #000;">ctm</div>
<div class="a" style="left:1070.1px;top:641.3px;width:1.6px;height:1.6px;background:#111;"></div>
<div class="a" style="left:1070.1px;top:645.3px;width:1.6px;height:1.6px;background:#111;"></div>
<div class="a" style="left:1073.8px;top:641.5px;width:9.100000000000136px;height:1px;background:#000;"></div>
<div class="a" style="left:1073.8px;top:645.5px;width:9.100000000000136px;height:1px;background:#000;"></div>
<div class="a t" style="left:1087.34px;top:635.80px;font:12.5px 'Liberation Mono', monospace;color:#000;letter-spacing:1.7px;-webkit-text-stroke:0.25px #000;">0,3</div>
<div class="a" style="left:1119px;top:641.5px;width:2px;height:2px;background:#000;"></div>
<svg class="a" style="left:1125px;top:634.5px;" width="5" height="23.5" viewBox="0 0 5 23.5"><path d="M4 0.5 Q0.5 11.75 4 23.0" fill="none" stroke="#000" stroke-width="1"/></svg>
<div class="a t" style="left:1132.18px;top:635.80px;font:italic 12.5px 'Liberation Mono', monospace;color:#000;letter-spacing:1.7px;-webkit-text-stroke:0.25px #000;">f</div>
<div class="a t" style="left:1140.73px;top:642.80px;font:italic 12.3px 'Liberation Mono', monospace;color:#000;letter-spacing:0.25px;-webkit-text-stroke:0.25px #000;">ck</div>
<svg class="a" style="left:1160px;top:634.5px;" width="5" height="23.5" viewBox="0 0 5 23.5"><path d="M1 0.5 Q4.5 11.75 1 23.0" fill="none" stroke="#000" stroke-width="1"/></svg>
<div class="a t" style="left:1168.7px;top:604.20px;font:12px 'Liberation Sans', sans-serif;color:#000;">2</div>
<div class="a" style="left:1168px;top:621px;width:11px;height:1px;background:#000;"></div>
<div class="a t" style="left:1168.7px;top:624.30px;font:12px 'Liberation Sans', sans-serif;color:#000;">3</div>
<div class="a" style="left:1185px;top:641px;width:10.5px;height:1px;background:#000;"></div>
<div class="a" style="left:1185px;top:645px;width:10.5px;height:1px;background:#000;"></div>
<div class="a t" style="left:1199.02px;top:635.80px;font:12.5px 'Liberation Mono', monospace;color:#000;letter-spacing:1.7px;-webkit-text-stroke:0.25px #000;">2,77</div>
<div class="a t" style="left:1240.11px;top:635.80px;font:12.5px 'Liberation Mono', monospace;color:#0000ff;transform:scaleX(1.2702);transform-origin:0 0;">MPa</div>
<div class="a t" style="left:1032.68px;top:677.70px;font:italic 12.5px 'Liberation Mono', monospace;color:#000;letter-spacing:1.7px;-webkit-text-stroke:0.25px #000;">f</div>
<div class="a t" style="left:1042.03px;top:684.70px;font:italic 12.3px 'Liberation Mono', monospace;color:#000;letter-spacing:0.25px;-webkit-text-stroke:0.25px #000;">ctk,inf</div>
<div class="a" style="left:1099.8px;top:683.3px;width:1.6px;height:1.6px;background:#111;"></div>
<div class="a" style="left:1099.8px;top:687.3px;width:1.6px;height:1.6px;background:#111;"></div>
<div class="a" style="left:1103.5px;top:683.5px;width:9.099999999999909px;height:1px;background:#000;"></div>
<div class="a" style="left:1103.5px;top:687.5px;width:9.099999999999909px;height:1px;background:#000;"></div>
<div class="a t" style="left:1117.04px;top:677.70px;font:12.5px 'Liberation Mono', monospace;color:#000;letter-spacing:1.7px;-webkit-text-stroke:0.25px #000;">0,7</div>
<div class="a" style="left:1148px;top:683.5px;width:2px;height:2px;background:#000;"></div>
<div class="a t" style="left:1154.88px;top:677.70px;font:italic 12.5px 'Liberation Mono', monospace;color:#000;letter-spacing:1.7px;-webkit-text-stroke:0.25px #000;">f</div>
<div class="a t" style="left:1163.33px;top:684.70px;font:italic 12.3px 'Liberation Mono', monospace;color:#000;letter-spacing:0.25px;-webkit-text-stroke:0.25px #000;">ctm</div>
<div class="a" style="left:1192px;top:683.5px;width:10.5px;height:1px;background:#000;"></div>
<div class="a" style="left:1192px;top:687.5px;width:10.5px;height:1px;background:#000;"></div>
<div class="a t" style="left:1206.8px;top:677.70px;font:12.5px 'Liberation Mono', monospace;color:#000;letter-spacing:1.7px;-webkit-text-stroke:0.25px #000;">1,94</div>
<div class="a t" style="left:1247.11px;top:677.70px;font:12.5px 'Liberation Mono', monospace;color:#0000ff;transform:scaleX(1.2702);transform-origin:0 0;">MPa</div>
<div class="a t" style="left:1032.08px;top:729.30px;font:italic 12.5px 'Liberation Mono', monospace;color:#000;letter-spacing:1.7px;-webkit-text-stroke:0.25px #000;">f</div>
<div class="a t" style="left:1042.43px;top:734.50px;font:italic 12.3px 'Liberation Mono', monospace;color:#000;letter-spacing:0.25px;-webkit-text-stroke:0.25px #000;">ctk,sup</div>
<div class="a" style="left:1099.3px;top:734.8px;width:1.6px;height:1.6px;background:#111;"></div>
<div class="a" style="left:1099.3px;top:738.8px;width:1.6px;height:1.6px;background:#111;"></div>
<div class="a" style="left:1103px;top:735px;width:10.700000000000045px;height:1px;background:#000;"></div>
<div class="a" style="left:1103px;top:739px;width:10.700000000000045px;height:1px;background:#000;"></div>
<div class="a t" style="left:1116.4px;top:729.30px;font:12.5px 'Liberation Mono', monospace;color:#000;letter-spacing:1.7px;-webkit-text-stroke:0.25px #000;">1,3</div>
<div class="a" style="left:1149px;top:735px;width:2px;height:2px;background:#000;"></div>
<div class="a t" style="left:1153.68px;top:729.30px;font:italic 12.5px 'Liberation Mono', monospace;color:#000;letter-spacing:1.7px;-webkit-text-stroke:0.25px #000;">f</div>
<div class="a t" style="left:1164.13px;top:736.30px;font:italic 12.3px 'Liberation Mono', monospace;color:#000;letter-spacing:0.25px;-webkit-text-stroke:0.25px #000;">ctm</div>
<div class="a" style="left:1191.5px;top:735px;width:11.0px;height:1px;background:#000;"></div>
<div class="a" style="left:1191.5px;top:739px;width:11.0px;height:1px;background:#000;"></div>
<div class="a t" style="left:1206.52px;top:729.30px;font:12.5px 'Liberation Mono', monospace;color:#000;letter-spacing:1.7px;-webkit-text-stroke:0.25px #000;">3,6</div>
<div class="a t" style="left:1238.21px;top:729.30px;font:12.5px 'Liberation Mono', monospace;color:#0000ff;transform:scaleX(1.2702);transform-origin:0 0;">MPa</div>
<div class="a t" style="left:1032.08px;top:801.80px;font:italic 12.5px 'Liberation Mono', monospace;color:#000;letter-spacing:1.7px;-webkit-text-stroke:0.25px #000;">f</div>
<div class="a t" style="left:1042.33px;top:808.40px;font:italic 12.3px 'Liberation Mono', monospace;color:#000;letter-spacing:0.25px;-webkit-text-stroke:0.25px #000;">ctd</div>
<div class="a" style="left:1070.2px;top:807.3px;width:1.6px;height:1.6px;background:#111;"></div>
<div class="a" style="left:1070.2px;top:811.3px;width:1.6px;height:1.6px;background:#111;"></div>
<div class="a" style="left:1073.9px;top:807.5px;width:9.799999999999955px;height:1px;background:#000;"></div>
<div class="a" style="left:1073.9px;top:811.5px;width:9.799999999999955px;height:1px;background:#000;"></div>
<div class="a t" style="left:1087.34px;top:801.80px;font:12.5px 'Liberation Mono', monospace;color:#000;letter-spacing:1.7px;-webkit-text-stroke:0.25px #000;">0,15</div>
<div class="a" style="left:1128px;top:807.5px;width:2px;height:2px;background:#000;"></div>
<svg class="a" style="left:1134px;top:803.8px;" width="5" height="19.5" viewBox="0 0 5 19.5"><path d="M4 0.5 Q0.5 9.75 4 19.0" fill="none" stroke="#000" stroke-width="1"/></svg>
<div class="a t" style="left:1140.38px;top:801.80px;font:italic 12.5px 'Liberation Mono', monospace;color:#000;letter-spacing:1.7px;-webkit-text-stroke:0.25px #000;">f</div>
<div class="a t" style="left:1149.53px;top:808.40px;font:italic 12.3px 'Liberation Mono', monospace;color:#000;letter-spacing:0.25px;-webkit-text-stroke:0.25px #000;">ck</div>
<svg class="a" style="left:1169px;top:803.8px;" width="5" height="19.5" viewBox="0 0 5 19.5"><path d="M1 0.5 Q4.5 9.75 1 19.0" fill="none" stroke="#000" stroke-width="1"/></svg>
<div class="a t" style="left:1177.6000000000001px;top:770.20px;font:12px 'Liberation Sans', sans-serif;color:#000;">2</div>
<div class="a" style="left:1177px;top:786px;width:12px;height:1px;background:#000;"></div>
<div class="a t" style="left:1177.6000000000001px;top:789.20px;font:12px 'Liberation Sans', sans-serif;color:#000;">3</div>
<div class="a" style="left:1194px;top:807.5px;width:11px;height:1px;background:#000;"></div>
<div class="a" style="left:1194px;top:811.5px;width:11px;height:1px;background:#000;"></div>
<div class="a t" style="left:1208.9px;top:801.80px;font:12.5px 'Liberation Mono', monospace;color:#000;letter-spacing:1.7px;-webkit-text-stroke:0.25px #000;">1,38</div>
<div class="a t" style="left:1249.21px;top:801.80px;font:12.5px 'Liberation Mono', monospace;color:#0000ff;transform:scaleX(1.2702);transform-origin:0 0;">MPa</div>
<div class="a" style="left:1033px;top:841px;width:250px;height:35px;box-sizing:border-box;border:2px solid #666;background:#fff;"></div>
<div class="a t" style="left:1045.58px;top:851.20px;font:13px 'Liberation Mono', monospace;color:#000;letter-spacing:1.55px;-webkit-text-stroke:0.25px #000;">Granito ou gnaisse</div>
<svg class="a" style="left:1256px;top:853px;" width="15" height="10" viewBox="0 0 15 10"><path d="M1.5 1.5 L7.5 7.5 L13.5 1.5" fill="none" stroke="#333" stroke-width="2.6"/></svg>
<div class="a t" style="left:1033.05px;top:917.90px;font:italic 12.5px 'Liberation Mono', monospace;color:#000;letter-spacing:1.7px;-webkit-text-stroke:0.25px #000;">E</div>
<div class="a t" style="left:1042.33px;top:924.00px;font:italic 12.3px 'Liberation Mono', monospace;color:#000;letter-spacing:0.25px;-webkit-text-stroke:0.25px #000;">ci</div>
<div class="a" style="left:1062.8999999999999px;top:923.3px;width:1.6px;height:1.6px;background:#111;"></div>
<div class="a" style="left:1062.8999999999999px;top:927.3px;width:1.6px;height:1.6px;background:#111;"></div>
<div class="a" style="left:1066.6px;top:923.5px;width:10.600000000000136px;height:1px;background:#000;"></div>
<div class="a" style="left:1066.6px;top:927.5px;width:10.600000000000136px;height:1px;background:#000;"></div>
<div class="a t" style="left:1080.17px;top:917.90px;font:italic 12.5px 'Liberation Mono', monospace;color:#000;letter-spacing:1.7px;-webkit-text-stroke:0.25px #000;">α</div>
<div class="a t" style="left:1088.96px;top:925.20px;font:italic 12.3px 'Liberation Mono', monospace;color:#000;letter-spacing:0.25px;-webkit-text-stroke:0.25px #000;">E</div>
<div class="a" style="left:1103.5px;top:923.5px;width:2px;height:2px;background:#000;"></div>
<div class="a t" style="left:1109.22px;top:917.90px;font:12.5px 'Liberation Mono', monospace;color:#000;letter-spacing:1.7px;-webkit-text-stroke:0.25px #000;">5600</div>
<div class="a" style="left:1148.5px;top:923.5px;width:2px;height:2px;background:#000;"></div>
<svg class="a" style="left:1154px;top:913px;" width="44" height="26" viewBox="0 0 44 26"><path d="M1 16 L4 14 L9 24.5 L13 1.5 L42.5 1.5 L42.5 4" fill="none" stroke="#000" stroke-width="1.1"/></svg>
<div class="a t" style="left:1167.08px;top:917.90px;font:italic 12.5px 'Liberation Mono', monospace;color:#000;letter-spacing:1.7px;-webkit-text-stroke:0.25px #000;">f</div>
<div class="a t" style="left:1177.33px;top:924.00px;font:italic 12.3px 'Liberation Mono', monospace;color:#000;letter-spacing:0.25px;-webkit-text-stroke:0.25px #000;">ck</div>
<div class="a" style="left:1201.3px;top:923.5px;width:13.299999999999955px;height:1px;background:#000;"></div>
<div class="a" style="left:1201.3px;top:927.5px;width:13.299999999999955px;height:1px;background:#000;"></div>
<div class="a t" style="left:1216.12px;top:917.90px;font:12.5px 'Liberation Mono', monospace;color:#000;letter-spacing:1.7px;-webkit-text-stroke:0.25px #000;">29632,41</div>
<div class="a t" style="left:1294.21px;top:917.90px;font:12.5px 'Liberation Mono', monospace;color:#0000ff;transform:scaleX(1.2702);transform-origin:0 0;">MPa</div>
</body></html>
